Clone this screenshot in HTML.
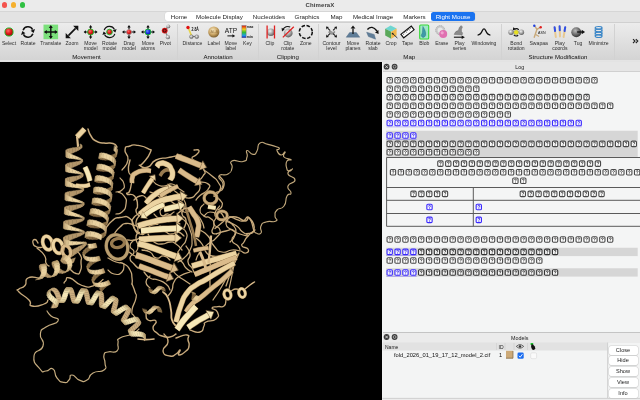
<!DOCTYPE html>
<html><head><meta charset="utf-8"><title>ChimeraX</title>
<style>
*{margin:0;padding:0;box-sizing:border-box}
html,body{width:640px;height:400px;overflow:hidden;background:#ececec;font-family:"Liberation Sans",sans-serif;}
#root{will-change:transform;position:relative;width:640px;height:400px;background:#ececec;overflow:hidden}
.abs{position:absolute}
#titlebar{left:0;top:0;width:640px;height:22.5px;background:linear-gradient(#ebebeb 0,#ebebeb 11.2px,#d6d6d6 11.2px,#d6d6d6 11.8px,#e3e3e3 11.8px,#e3e3e3 22px,#d0d0d0 22px)}
#title{left:0;width:640px;top:2px;text-align:center;font-size:6px;font-weight:bold;color:#3c3c3c;letter-spacing:.1px}
.tl{width:5.4px;height:5.4px;border-radius:50%;top:2.3px}
#tabs{left:164.5px;top:11.6px;width:310px;height:9.2px;background:#fff;border-radius:3px;box-shadow:0 0 0 .5px #d6d6d6}
.tab{position:absolute;top:11.6px;height:9.2px;font-size:6.2px;line-height:9.4px;color:#222;text-align:center;white-space:nowrap}
.tab.sel{background:#1a73f0;color:#fff;border-radius:2.5px}
#toolbar{left:0;top:22.5px;width:640px;height:39.5px;background:linear-gradient(#ececec 0,#d4d4d4 36.5px,#e4e4e4 37.5px,#e2e2e2 39.5px);}
.lbl{position:absolute;font-size:5.1px;line-height:5px;color:#2c2c2c;text-align:center;white-space:nowrap;transform:translateX(-50%)}
.grp{position:absolute;top:52.9px;font-size:6.1px;line-height:7px;color:#111;text-align:center;transform:translateX(-50%);white-space:nowrap}
.vsep{position:absolute;top:24px;width:1px;height:36px;background:#d2d2d2}
#view{left:0;top:62px;width:382.2px;height:338px;background:#000}
#right{left:382.2px;top:62px;width:257.8px;height:338.5px;background:#f3f4f4}
.hdr{position:absolute;left:382.5px;width:257.5px;padding-left:17px;background:#e6e6e6;font-size:5.4px;text-align:center;color:#222}
.btn{position:absolute;left:608.5px;width:29px;height:9px;background:#fff;border-radius:2px;box-shadow:0 0 0 .5px #cfcfcf,0 .5px .5px #bbb;font-size:5.6px;line-height:9px;text-align:center;color:#222}
svg{position:absolute;left:0;top:0}
</style></head><body><div id="root">
<div id="titlebar" class="abs"></div>
<div class="abs tl" style="left:1.8px;background:#f4544d"></div><div class="abs tl" style="left:10.8px;background:#f5b02e"></div><div class="abs tl" style="left:19.9px;background:#2fc042"></div>
<div id="title" class="abs">ChimeraX</div>
<div id="tabs" class="abs"></div>
<div class="tab" style="left:165px;width:28px">Home</div>
<div class="tab" style="left:193px;width:53px">Molecule Display</div>
<div class="tab" style="left:249px;width:40px">Nucleotides</div>
<div class="tab" style="left:291px;width:32px">Graphics</div>
<div class="tab" style="left:326px;width:21px">Map</div>
<div class="tab" style="left:349px;width:48px">Medical Image</div>
<div class="tab" style="left:399px;width:31px">Markers</div>
<div class="tab sel" style="left:431px;width:44px">Right Mouse</div>
<div id="toolbar" class="abs"></div>
<div class="vsep" style="left:176.5px"></div>
<div class="vsep" style="left:258.2px"></div>
<div class="vsep" style="left:317.5px"></div>
<div class="vsep" style="left:501.1px"></div>
<div class="vsep" style="left:614.2px"></div>
<div class="lbl" style="left:9px;top:40.6px">Select</div>
<div class="lbl" style="left:28px;top:40.6px">Rotate</div>
<div class="lbl" style="left:50.8px;top:40.6px">Translate</div>
<div class="lbl" style="left:72px;top:40.6px">Zoom</div>
<div class="lbl" style="left:90.6px;top:40.6px">Move<br>model</div>
<div class="lbl" style="left:109.5px;top:40.6px">Rotate<br>model</div>
<div class="lbl" style="left:129px;top:40.6px">Drag<br>model</div>
<div class="lbl" style="left:148px;top:40.6px">Move<br>atoms</div>
<div class="lbl" style="left:165.3px;top:40.6px">Pivot</div>
<div class="lbl" style="left:192.5px;top:40.6px">Distance</div>
<div class="lbl" style="left:213.8px;top:40.6px">Label</div>
<div class="lbl" style="left:230.8px;top:40.6px">Move<br>label</div>
<div class="lbl" style="left:247.5px;top:40.6px">Key</div>
<div class="lbl" style="left:270px;top:40.6px">Clip</div>
<div class="lbl" style="left:287.8px;top:40.6px">Clip<br>rotate</div>
<div class="lbl" style="left:305.8px;top:40.6px">Zone</div>
<div class="lbl" style="left:331.5px;top:40.6px">Contour<br>level</div>
<div class="lbl" style="left:353px;top:40.6px">Move<br>planes</div>
<div class="lbl" style="left:373px;top:40.6px">Rotate<br>slab</div>
<div class="lbl" style="left:391px;top:40.6px">Crop</div>
<div class="lbl" style="left:407.5px;top:40.6px">Tape</div>
<div class="lbl" style="left:424.3px;top:40.6px">Blob</div>
<div class="lbl" style="left:441.8px;top:40.6px">Erase</div>
<div class="lbl" style="left:459.5px;top:40.6px">Play<br>series</div>
<div class="lbl" style="left:484px;top:40.6px">Windowing</div>
<div class="lbl" style="left:516.2px;top:40.6px">Bond<br>rotation</div>
<div class="lbl" style="left:538.7px;top:40.6px">Swapaa</div>
<div class="lbl" style="left:559.8px;top:40.6px">Play<br>coords</div>
<div class="lbl" style="left:578.1px;top:40.6px">Tug</div>
<div class="lbl" style="left:598.6px;top:40.6px">Minimize</div>
<div class="grp" style="left:86.5px">Movement</div>
<div class="grp" style="left:218px">Annotation</div>
<div class="grp" style="left:287.8px">Clipping</div>
<div class="grp" style="left:409.3px">Map</div>
<div class="grp" style="left:558px">Structure Modification</div>
<svg width="640" height="62" viewBox="0 0 640 62"><path d="M633 39.2l2 1.9-2 1.9M635.8 39.2l2 1.9-2 1.9" fill="none" stroke="#222" stroke-width="1.1"/></svg>
<div id="view" class="abs"></div>
<div id="right" class="abs"></div>
<div class="hdr" style="top:61.5px;height:10px;line-height:10px;border-bottom:.5px solid #d0d0d0">Log</div>
<div class="hdr" style="top:331.5px;height:11px;line-height:11px;border-top:.7px solid #c4c4c4;background:#ebebeb">Models</div>
<svg width="640" height="400" viewBox="0 0 640 400">
<defs>
<g id="pg"><rect x=".55" y=".55" width="5.3" height="5.5" rx="1.1" fill="#ffffff" stroke="#484848" stroke-width="1.1"/><path d="M2.3 2.6q0-.9.95-.9t.95.75q0 .5-.95 1v.4M3.25 4.5v.6" stroke="#222" stroke-width=".75" fill="none"/></g>
<g id="pd"><rect x=".55" y=".55" width="5.3" height="5.5" rx="1.1" fill="#f8f8f8" stroke="#333333" stroke-width="1.1"/><path d="M2.3 2.6q0-.9.95-.9t.95.75q0 .5-.95 1v.4M3.25 4.5v.6" stroke="#111" stroke-width=".75" fill="none"/></g>
<g id="pb"><rect x=".55" y=".55" width="5.3" height="5.5" rx="1.1" fill="#f4f4ff" stroke="#3a28ff" stroke-width="1.1"/><path d="M2.3 2.6q0-.9.95-.9t.95.75q0 .5-.95 1v.4M3.25 4.5v.6" stroke="#1a0ce0" stroke-width=".75" fill="none"/></g>
</defs>
<rect x="382.5" y="72" width="257.5" height="259.5" fill="#f4f5f5"/>
<rect x="386" y="130.75" width="251.7" height="26.15" fill="#d6d6d6"/>
<rect x="386" y="247.75" width="251.7" height="8.35" fill="#d6d6d6"/>
<rect x="386" y="268.25" width="251.7" height="8.35" fill="#d6d6d6"/>
<use href="#pg" x="386.50" y="77.00"/><use href="#pg" x="394.38" y="77.00"/><use href="#pg" x="402.25" y="77.00"/><use href="#pg" x="410.12" y="77.00"/><use href="#pg" x="418.00" y="77.00"/><use href="#pg" x="425.88" y="77.00"/><use href="#pg" x="433.75" y="77.00"/><use href="#pg" x="441.62" y="77.00"/><use href="#pg" x="449.50" y="77.00"/><use href="#pg" x="457.38" y="77.00"/><use href="#pg" x="465.25" y="77.00"/><use href="#pg" x="473.12" y="77.00"/><use href="#pg" x="481.00" y="77.00"/><use href="#pg" x="488.88" y="77.00"/><use href="#pg" x="496.75" y="77.00"/><use href="#pg" x="504.62" y="77.00"/><use href="#pg" x="512.50" y="77.00"/><use href="#pg" x="520.38" y="77.00"/><use href="#pg" x="528.25" y="77.00"/><use href="#pg" x="536.12" y="77.00"/><use href="#pg" x="544.00" y="77.00"/><use href="#pg" x="551.88" y="77.00"/><use href="#pg" x="559.75" y="77.00"/><use href="#pg" x="567.62" y="77.00"/><use href="#pg" x="575.50" y="77.00"/><use href="#pg" x="583.38" y="77.00"/><use href="#pg" x="591.25" y="77.00"/>
<use href="#pg" x="386.50" y="85.50"/><use href="#pg" x="394.38" y="85.50"/><use href="#pg" x="402.25" y="85.50"/><use href="#pg" x="410.12" y="85.50"/><use href="#pg" x="418.00" y="85.50"/><use href="#pg" x="425.88" y="85.50"/><use href="#pg" x="433.75" y="85.50"/><use href="#pg" x="441.62" y="85.50"/><use href="#pg" x="449.50" y="85.50"/><use href="#pg" x="457.38" y="85.50"/><use href="#pg" x="465.25" y="85.50"/><use href="#pg" x="473.12" y="85.50"/>
<use href="#pg" x="386.50" y="93.85"/><use href="#pg" x="394.38" y="93.85"/><use href="#pg" x="402.25" y="93.85"/><use href="#pg" x="410.12" y="93.85"/><use href="#pg" x="418.00" y="93.85"/><use href="#pg" x="425.88" y="93.85"/><use href="#pg" x="433.75" y="93.85"/><use href="#pg" x="441.62" y="93.85"/><use href="#pg" x="449.50" y="93.85"/><use href="#pg" x="457.38" y="93.85"/><use href="#pg" x="465.25" y="93.85"/><use href="#pg" x="473.12" y="93.85"/><use href="#pg" x="481.00" y="93.85"/><use href="#pg" x="488.88" y="93.85"/><use href="#pg" x="496.75" y="93.85"/><use href="#pg" x="504.62" y="93.85"/><use href="#pg" x="512.50" y="93.85"/><use href="#pg" x="520.38" y="93.85"/><use href="#pg" x="528.25" y="93.85"/><use href="#pg" x="536.12" y="93.85"/><use href="#pg" x="544.00" y="93.85"/><use href="#pg" x="551.88" y="93.85"/><use href="#pg" x="559.75" y="93.85"/><use href="#pg" x="567.62" y="93.85"/><use href="#pg" x="575.50" y="93.85"/><use href="#pg" x="583.38" y="93.85"/>
<use href="#pg" x="386.50" y="102.50"/><use href="#pg" x="394.38" y="102.50"/><use href="#pg" x="402.25" y="102.50"/><use href="#pg" x="410.12" y="102.50"/><use href="#pg" x="418.00" y="102.50"/><use href="#pg" x="425.88" y="102.50"/><use href="#pg" x="433.75" y="102.50"/><use href="#pg" x="441.62" y="102.50"/><use href="#pg" x="449.50" y="102.50"/><use href="#pg" x="457.38" y="102.50"/><use href="#pg" x="465.25" y="102.50"/><use href="#pg" x="473.12" y="102.50"/><use href="#pg" x="481.00" y="102.50"/><use href="#pg" x="488.88" y="102.50"/><use href="#pg" x="496.75" y="102.50"/><use href="#pg" x="504.62" y="102.50"/><use href="#pg" x="512.50" y="102.50"/><use href="#pg" x="520.38" y="102.50"/><use href="#pg" x="528.25" y="102.50"/><use href="#pg" x="536.12" y="102.50"/><use href="#pg" x="544.00" y="102.50"/><use href="#pg" x="551.88" y="102.50"/><use href="#pg" x="559.75" y="102.50"/><use href="#pg" x="567.62" y="102.50"/><use href="#pg" x="575.50" y="102.50"/><use href="#pg" x="583.38" y="102.50"/><use href="#pg" x="591.25" y="102.50"/><use href="#pg" x="599.12" y="102.50"/><use href="#pg" x="607.00" y="102.50"/>
<use href="#pg" x="386.50" y="111.15"/><use href="#pg" x="394.38" y="111.15"/><use href="#pg" x="402.25" y="111.15"/><use href="#pg" x="410.12" y="111.15"/><use href="#pg" x="418.00" y="111.15"/><use href="#pg" x="425.88" y="111.15"/><use href="#pg" x="433.75" y="111.15"/><use href="#pg" x="441.62" y="111.15"/><use href="#pg" x="449.50" y="111.15"/><use href="#pg" x="457.38" y="111.15"/><use href="#pg" x="465.25" y="111.15"/><use href="#pg" x="473.12" y="111.15"/><use href="#pg" x="481.00" y="111.15"/><use href="#pg" x="488.88" y="111.15"/><use href="#pg" x="496.75" y="111.15"/><use href="#pg" x="504.62" y="111.15"/>
<use href="#pb" x="386.50" y="119.75"/><use href="#pb" x="394.38" y="119.75"/><use href="#pb" x="402.25" y="119.75"/><use href="#pb" x="410.12" y="119.75"/><use href="#pb" x="418.00" y="119.75"/><use href="#pb" x="425.88" y="119.75"/><use href="#pb" x="433.75" y="119.75"/><use href="#pb" x="441.62" y="119.75"/><use href="#pb" x="449.50" y="119.75"/><use href="#pb" x="457.38" y="119.75"/><use href="#pb" x="465.25" y="119.75"/><use href="#pb" x="473.12" y="119.75"/><use href="#pb" x="481.00" y="119.75"/><use href="#pb" x="488.88" y="119.75"/><use href="#pb" x="496.75" y="119.75"/><use href="#pb" x="504.62" y="119.75"/><use href="#pb" x="512.50" y="119.75"/><use href="#pb" x="520.38" y="119.75"/><use href="#pb" x="528.25" y="119.75"/><use href="#pb" x="536.12" y="119.75"/><use href="#pb" x="544.00" y="119.75"/><use href="#pb" x="551.88" y="119.75"/><use href="#pb" x="559.75" y="119.75"/><use href="#pb" x="567.62" y="119.75"/><use href="#pb" x="575.50" y="119.75"/><rect x="386.5" y="126.6" width="195.475" height=".6" fill="#6a5cf5" opacity=".7"/>
<use href="#pb" x="386.50" y="132.25"/><use href="#pb" x="394.38" y="132.25"/><use href="#pb" x="402.25" y="132.25"/><use href="#pb" x="410.12" y="132.25"/><rect x="386.5" y="139.1" width="30.1" height=".6" fill="#6a5cf5" opacity=".7"/>
<use href="#pg" x="386.50" y="140.55"/><use href="#pg" x="394.38" y="140.55"/><use href="#pg" x="402.25" y="140.55"/><use href="#pg" x="410.12" y="140.55"/><use href="#pg" x="418.00" y="140.55"/><use href="#pg" x="425.88" y="140.55"/><use href="#pg" x="433.75" y="140.55"/><use href="#pg" x="441.62" y="140.55"/><use href="#pg" x="449.50" y="140.55"/><use href="#pg" x="457.38" y="140.55"/><use href="#pg" x="465.25" y="140.55"/><use href="#pg" x="473.12" y="140.55"/><use href="#pg" x="481.00" y="140.55"/><use href="#pg" x="488.88" y="140.55"/><use href="#pg" x="496.75" y="140.55"/><use href="#pg" x="504.62" y="140.55"/><use href="#pg" x="512.50" y="140.55"/><use href="#pg" x="520.38" y="140.55"/><use href="#pg" x="528.25" y="140.55"/><use href="#pg" x="536.12" y="140.55"/><use href="#pg" x="544.00" y="140.55"/><use href="#pg" x="551.88" y="140.55"/><use href="#pg" x="559.75" y="140.55"/><use href="#pg" x="567.62" y="140.55"/><use href="#pg" x="575.50" y="140.55"/><use href="#pg" x="583.38" y="140.55"/><use href="#pg" x="591.25" y="140.55"/><use href="#pg" x="599.12" y="140.55"/><use href="#pg" x="607.00" y="140.55"/><use href="#pg" x="614.88" y="140.55"/><use href="#pg" x="622.75" y="140.55"/><use href="#pg" x="630.62" y="140.55"/>
<use href="#pg" x="386.50" y="149.00"/><use href="#pg" x="394.38" y="149.00"/><use href="#pg" x="402.25" y="149.00"/><use href="#pg" x="410.12" y="149.00"/><use href="#pg" x="418.00" y="149.00"/><use href="#pg" x="425.88" y="149.00"/><use href="#pg" x="433.75" y="149.00"/><use href="#pg" x="441.62" y="149.00"/><use href="#pg" x="449.50" y="149.00"/><use href="#pg" x="457.38" y="149.00"/><use href="#pg" x="465.25" y="149.00"/><use href="#pg" x="473.12" y="149.00"/>
<g stroke="#5a5a5a" stroke-width="1" fill="none"><path d="M386.6 226.3V157.5H640M386.6 187.5H640M386.6 200.3H640M386.6 213.5H640M386.6 226.3H640M473.3 187.5V226.3"/></g>
<use href="#pg" x="437.20" y="160.35"/><use href="#pg" x="445.07" y="160.35"/><use href="#pg" x="452.95" y="160.35"/><use href="#pg" x="460.82" y="160.35"/><use href="#pg" x="468.70" y="160.35"/><use href="#pg" x="476.57" y="160.35"/><use href="#pg" x="484.45" y="160.35"/><use href="#pg" x="492.32" y="160.35"/><use href="#pg" x="500.20" y="160.35"/><use href="#pg" x="508.07" y="160.35"/><use href="#pg" x="515.95" y="160.35"/><use href="#pg" x="523.83" y="160.35"/><use href="#pg" x="531.70" y="160.35"/><use href="#pg" x="539.58" y="160.35"/><use href="#pg" x="547.45" y="160.35"/><use href="#pg" x="555.33" y="160.35"/><use href="#pg" x="563.20" y="160.35"/><use href="#pg" x="571.08" y="160.35"/><use href="#pg" x="578.95" y="160.35"/><use href="#pg" x="586.83" y="160.35"/><use href="#pg" x="594.70" y="160.35"/>
<use href="#pg" x="389.80" y="168.95"/><use href="#pg" x="397.68" y="168.95"/><use href="#pg" x="405.55" y="168.95"/><use href="#pg" x="413.43" y="168.95"/><use href="#pg" x="421.30" y="168.95"/><use href="#pg" x="429.18" y="168.95"/><use href="#pg" x="437.05" y="168.95"/><use href="#pg" x="444.93" y="168.95"/><use href="#pg" x="452.80" y="168.95"/><use href="#pg" x="460.68" y="168.95"/><use href="#pg" x="468.55" y="168.95"/><use href="#pg" x="476.43" y="168.95"/><use href="#pg" x="484.30" y="168.95"/><use href="#pg" x="492.18" y="168.95"/><use href="#pg" x="500.05" y="168.95"/><use href="#pg" x="507.93" y="168.95"/><use href="#pg" x="515.80" y="168.95"/><use href="#pg" x="523.67" y="168.95"/><use href="#pg" x="531.55" y="168.95"/><use href="#pg" x="539.42" y="168.95"/><use href="#pg" x="547.30" y="168.95"/><use href="#pg" x="555.17" y="168.95"/><use href="#pg" x="563.05" y="168.95"/><use href="#pg" x="570.92" y="168.95"/><use href="#pg" x="578.80" y="168.95"/><use href="#pg" x="586.67" y="168.95"/><use href="#pg" x="594.55" y="168.95"/><use href="#pg" x="602.42" y="168.95"/><use href="#pg" x="610.30" y="168.95"/><use href="#pg" x="618.17" y="168.95"/><use href="#pg" x="626.05" y="168.95"/><use href="#pg" x="633.92" y="168.95"/>
<use href="#pg" x="512.20" y="177.45"/><use href="#pg" x="520.08" y="177.45"/>
<use href="#pg" x="410.30" y="190.55"/><use href="#pg" x="418.18" y="190.55"/><use href="#pg" x="426.05" y="190.55"/><use href="#pg" x="433.93" y="190.55"/><use href="#pg" x="441.80" y="190.55"/>
<use href="#pg" x="519.60" y="190.55"/><use href="#pg" x="527.48" y="190.55"/><use href="#pg" x="535.35" y="190.55"/><use href="#pg" x="543.23" y="190.55"/><use href="#pg" x="551.10" y="190.55"/><use href="#pg" x="558.98" y="190.55"/><use href="#pg" x="566.85" y="190.55"/><use href="#pg" x="574.73" y="190.55"/><use href="#pg" x="582.60" y="190.55"/><use href="#pg" x="590.48" y="190.55"/><use href="#pg" x="598.35" y="190.55"/>
<use href="#pb" x="426.30" y="203.75"/>
<use href="#pb" x="475.60" y="203.75"/>
<use href="#pb" x="426.30" y="216.55"/>
<use href="#pb" x="475.60" y="216.55"/>
<use href="#pg" x="386.50" y="236.15"/><use href="#pg" x="394.38" y="236.15"/><use href="#pg" x="402.25" y="236.15"/><use href="#pg" x="410.12" y="236.15"/><use href="#pg" x="418.00" y="236.15"/><use href="#pg" x="425.88" y="236.15"/><use href="#pg" x="433.75" y="236.15"/><use href="#pg" x="441.62" y="236.15"/><use href="#pg" x="449.50" y="236.15"/><use href="#pg" x="457.38" y="236.15"/><use href="#pg" x="465.25" y="236.15"/><use href="#pg" x="473.12" y="236.15"/><use href="#pg" x="481.00" y="236.15"/><use href="#pg" x="488.88" y="236.15"/><use href="#pg" x="496.75" y="236.15"/><use href="#pg" x="504.62" y="236.15"/><use href="#pg" x="512.50" y="236.15"/><use href="#pg" x="520.38" y="236.15"/><use href="#pg" x="528.25" y="236.15"/><use href="#pg" x="536.12" y="236.15"/><use href="#pg" x="544.00" y="236.15"/><use href="#pg" x="551.88" y="236.15"/><use href="#pg" x="559.75" y="236.15"/><use href="#pg" x="567.62" y="236.15"/><use href="#pg" x="575.50" y="236.15"/><use href="#pg" x="583.38" y="236.15"/><use href="#pg" x="591.25" y="236.15"/><use href="#pg" x="599.12" y="236.15"/><use href="#pg" x="607.00" y="236.15"/>
<use href="#pb" x="386.50" y="248.55"/><use href="#pb" x="394.38" y="248.55"/><use href="#pb" x="402.25" y="248.55"/><use href="#pb" x="410.12" y="248.55"/><rect x="386.5" y="255.4" width="30.1" height=".6" fill="#6a5cf5" opacity=".7"/>
<use href="#pd" x="418.00" y="248.55"/><use href="#pd" x="425.88" y="248.55"/><use href="#pd" x="433.75" y="248.55"/><use href="#pd" x="441.62" y="248.55"/><use href="#pd" x="449.50" y="248.55"/><use href="#pd" x="457.38" y="248.55"/><use href="#pd" x="465.25" y="248.55"/><use href="#pd" x="473.12" y="248.55"/><use href="#pd" x="481.00" y="248.55"/><use href="#pd" x="488.88" y="248.55"/><use href="#pd" x="496.75" y="248.55"/><use href="#pd" x="504.62" y="248.55"/><use href="#pd" x="512.50" y="248.55"/><use href="#pd" x="520.38" y="248.55"/><use href="#pd" x="528.25" y="248.55"/><use href="#pd" x="536.12" y="248.55"/><use href="#pd" x="544.00" y="248.55"/><use href="#pd" x="551.88" y="248.55"/>
<use href="#pg" x="386.50" y="257.25"/><use href="#pg" x="394.38" y="257.25"/><use href="#pg" x="402.25" y="257.25"/><use href="#pg" x="410.12" y="257.25"/><use href="#pg" x="418.00" y="257.25"/><use href="#pg" x="425.88" y="257.25"/><use href="#pg" x="433.75" y="257.25"/><use href="#pg" x="441.62" y="257.25"/><use href="#pg" x="449.50" y="257.25"/><use href="#pg" x="457.38" y="257.25"/><use href="#pg" x="465.25" y="257.25"/><use href="#pg" x="473.12" y="257.25"/><use href="#pg" x="481.00" y="257.25"/><use href="#pg" x="488.88" y="257.25"/><use href="#pg" x="496.75" y="257.25"/><use href="#pg" x="504.62" y="257.25"/><use href="#pg" x="512.50" y="257.25"/><use href="#pg" x="520.38" y="257.25"/><use href="#pg" x="528.25" y="257.25"/><use href="#pg" x="536.12" y="257.25"/>
<use href="#pb" x="386.50" y="269.25"/><use href="#pb" x="394.38" y="269.25"/><use href="#pb" x="402.25" y="269.25"/><use href="#pb" x="410.12" y="269.25"/><rect x="386.5" y="276.1" width="30.1" height=".6" fill="#6a5cf5" opacity=".7"/>
<use href="#pd" x="418.00" y="269.25"/><use href="#pd" x="425.88" y="269.25"/><use href="#pd" x="433.75" y="269.25"/><use href="#pd" x="441.62" y="269.25"/><use href="#pd" x="449.50" y="269.25"/><use href="#pd" x="457.38" y="269.25"/><use href="#pd" x="465.25" y="269.25"/><use href="#pd" x="473.12" y="269.25"/><use href="#pd" x="481.00" y="269.25"/><use href="#pd" x="488.88" y="269.25"/><use href="#pd" x="496.75" y="269.25"/><use href="#pd" x="504.62" y="269.25"/><use href="#pd" x="512.50" y="269.25"/><use href="#pd" x="520.38" y="269.25"/><use href="#pd" x="528.25" y="269.25"/><use href="#pd" x="536.12" y="269.25"/><use href="#pd" x="544.00" y="269.25"/><use href="#pd" x="551.88" y="269.25"/>
<circle cx="386.6" cy="66.7" r="2.9" fill="#3b3b3b"/><path d="M385.3 65.4l2.6 2.6m0-2.6l-2.6 2.6" stroke="#e8e8e8" stroke-width=".8"/>
<circle cx="394.6" cy="66.7" r="2.9" fill="#3b3b3b"/><circle cx="394.6" cy="66.7" r="1.4" fill="none" stroke="#ddd" stroke-width=".6"/>
<circle cx="386.6" cy="337" r="2.9" fill="#3b3b3b"/><path d="M385.3 335.7l2.6 2.6m0-2.6l-2.6 2.6" stroke="#e8e8e8" stroke-width=".8"/>
<circle cx="394.6" cy="337" r="2.9" fill="#3b3b3b"/><circle cx="394.6" cy="337" r="1.4" fill="none" stroke="#ddd" stroke-width=".6"/>
<rect x="382.5" y="342.5" width="225" height="8" fill="#e2e2e2"/>
<path d="M496.5 343v7M505 343v7M514 343v7M527.5 343v7" stroke="#cfcfcf" stroke-width=".6"/>
<path d="M607.6 342.5V398" stroke="#c8c8c8" stroke-width=".8"/>
<path d="M382.5 398.4H640" stroke="#bdbdbd" stroke-width=".8"/>
<rect x="382.5" y="398.8" width="257.5" height="1.2" fill="#ececec"/>
<rect x="506" y="350.8" width="7" height="7.6" fill="#cdaa78"/><path d="M506 358.2h7V351" stroke="#7a6240" stroke-width=".7" fill="none"/>
<rect x="517.5" y="352.6" width="6.2" height="6.2" rx="1.3" fill="#1a6cf0"/><path d="M518.9 355.8l1.3 1.4 2.2-3" stroke="#fff" stroke-width=".9" fill="none"/>
<rect x="530.7" y="352.8" width="5.9" height="5.9" rx="1.3" fill="#fafafa" stroke="#d2d2d2" stroke-width=".5"/>
<path d="M516.3 346.4q3.7-3.6 7.4 0q-3.7 3.6-7.4 0z" fill="none" stroke="#333" stroke-width=".7"/><circle cx="520" cy="346.4" r="1.2" fill="#333"/>
<rect x="530.6" y="343" width="2.6" height="2" fill="#19c22a"/><path d="M531.3 344.5l1.5-.3 2 2.2.6 2.3-1.6 1.3-1.7-.6-1-2.3z" fill="#111"/>
</svg>
<div class="abs" style="left:385px;top:343.5px;font-size:5px;line-height:6px;color:#222">Name</div>
<div class="abs" style="left:498.5px;top:343.5px;font-size:5px;line-height:6px;color:#222">ID</div>
<div class="abs" style="left:394px;top:352px;font-size:5.75px;line-height:7px;color:#111;white-space:nowrap">fold_2026_01_19_17_12_model_2.cif</div>
<div class="abs" style="left:499px;top:352px;font-size:5.75px;line-height:7px;color:#111">1</div>
<div class="btn" style="top:345.5px">Close</div>
<div class="btn" style="top:356.25px">Hide</div>
<div class="btn" style="top:367px">Show</div>
<div class="btn" style="top:377.75px">View</div>
<div class="btn" style="top:388.5px">Info</div>
<svg width="640" height="62" viewBox="0 0 640 62">
<g transform="translate(9 32)"><defs><radialGradient id="rg1" cx=".4" cy=".35" r=".7"><stop offset="0" stop-color="#ff6a6a"/><stop offset=".5" stop-color="#e01818"/><stop offset="1" stop-color="#8a0a0a"/></radialGradient><radialGradient id="bg1" cx=".4" cy=".35" r=".7"><stop offset="0" stop-color="#6a8aff"/><stop offset=".5" stop-color="#1830e0"/><stop offset="1" stop-color="#0a0a8a"/></radialGradient><radialGradient id="gg1" cx=".4" cy=".35" r=".7"><stop offset="0" stop-color="#f4f4f4"/><stop offset=".6" stop-color="#9a9a9a"/><stop offset="1" stop-color="#555"/></radialGradient></defs><circle r="4.1" fill="url(#rg1)" stroke="#18c028" stroke-width=".9"/></g>
<g transform="translate(28 32)"><g fill="none" stroke="#111" stroke-width="1.5"><path d="M-4.9 -1.8A5.2 5.2 0 0 1 4.6 -2.4"/><path d="M4.9 1.8A5.2 5.2 0 0 1 -4.6 2.4"/></g><path d="M5.6 .9L7 -2.9L2.6 -1.3z" fill="#111"/><path d="M-5.6 -.9L-7 2.9L-2.6 1.3z" fill="#111"/></g>
<g transform="translate(50.8 32)"><rect x="-7.3" y="-7.4" width="14.6" height="14.6" fill="#7be07b"/><path d="M0 -5.9 V5.9 M-5.9 0 H5.9" stroke="#111" stroke-width="1.4"/><path transform="rotate(0)" d="M0 -6.9 l2 2.9 h-4z" fill="#111"/><path transform="rotate(90)" d="M0 -6.9 l2 2.9 h-4z" fill="#111"/><path transform="rotate(180)" d="M0 -6.9 l2 2.9 h-4z" fill="#111"/><path transform="rotate(270)" d="M0 -6.9 l2 2.9 h-4z" fill="#111"/></g>
<g transform="translate(72 32)"><path d="M-3.6 3.6L3.6 -3.6" stroke="#111" stroke-width="1.7"/><path d="M6.3 -6.3h-5.2l5.2 5.2z" fill="#111"/><path d="M-6.3 6.3h5.2l-5.2-5.2z" fill="#111"/></g>
<g transform="translate(90.6 32)"><path d="M0 -6 V6 M-6 0 H6" stroke="#111" stroke-width="1.1"/><path transform="rotate(0)" d="M0 -7 l1.7 2.4 h-3.4z" fill="#111"/><path transform="rotate(90)" d="M0 -7 l1.7 2.4 h-3.4z" fill="#111"/><path transform="rotate(180)" d="M0 -7 l1.7 2.4 h-3.4z" fill="#111"/><path transform="rotate(270)" d="M0 -7 l1.7 2.4 h-3.4z" fill="#111"/><circle r="3" fill="url(#rg1)" stroke="#18c028" stroke-width=".9"/></g>
<g transform="translate(109.5 32)"><g fill="none" stroke="#111" stroke-width="1.2"><path d="M-5.3 -1.9A5.6 5.6 0 0 1 5 -2.6"/><path d="M5.3 1.9A5.6 5.6 0 0 1 -5 2.6"/></g><path d="M5.9 .6L7.1 -2.9L3.2 -1.5z" fill="#111"/><path d="M-5.9 -.6L-7.1 2.9L-3.2 1.5z" fill="#111"/><circle r="2.8" fill="url(#rg1)" stroke="#18c028" stroke-width=".9"/></g>
<g transform="translate(129 32)"><path d="M0 -6 V6 M-6 0 H6" stroke="#111" stroke-width="1.1"/><path transform="rotate(0)" d="M0 -7 l1.7 2.4 h-3.4z" fill="#111"/><path transform="rotate(90)" d="M0 -7 l1.7 2.4 h-3.4z" fill="#111"/><path transform="rotate(180)" d="M0 -7 l1.7 2.4 h-3.4z" fill="#111"/><path transform="rotate(270)" d="M0 -7 l1.7 2.4 h-3.4z" fill="#111"/><circle r="2.6" fill="url(#rg1)" stroke="#aaa" stroke-width=".6"/></g>
<g transform="translate(148 32)"><path d="M0 -6 V6 M-6 0 H6" stroke="#111" stroke-width="1.1"/><path transform="rotate(0)" d="M0 -7 l1.7 2.4 h-3.4z" fill="#111"/><path transform="rotate(90)" d="M0 -7 l1.7 2.4 h-3.4z" fill="#111"/><path transform="rotate(180)" d="M0 -7 l1.7 2.4 h-3.4z" fill="#111"/><path transform="rotate(270)" d="M0 -7 l1.7 2.4 h-3.4z" fill="#111"/><circle r="3" fill="url(#bg1)" stroke="#18c028" stroke-width=".9"/></g>
<g transform="translate(165.3 32)"><path d="M-0.5 -1.5L3 -5.5M-0.5 -1.5L2.6 5" stroke="#888" stroke-width="1.3"/><circle cx="3" cy="-5.6" r="1.9" fill="url(#gg1)"/><circle cx="2.6" cy="5.2" r="2.1" fill="url(#gg1)"/><circle cx="-0.6" cy="-1.4" r="2.9" fill="#d81414"/><circle cx="-0.6" cy="-1.4" r="1.5" fill="none" stroke="#111" stroke-width=".8"/></g>
<g transform="translate(192.5 32)"><g transform="translate(.5 1.3)"><path d="M-4.8 -5.6L-1.4 2.6" stroke="#e6d44a" stroke-width="1.6"/><path d="M-1.4 3.2H3.6" stroke="#777" stroke-width="1.2"/><circle cx="-5" cy="-5.8" r="1.7" fill="#e01010"/><circle cx="-1.6" cy="3.4" r="1.9" fill="url(#gg1)" stroke="#666" stroke-width=".4"/><circle cx="3.8" cy="3.4" r="1.9" fill="url(#gg1)" stroke="#666" stroke-width=".4"/><text x="-1.5" y="-2.2" font-size="5" font-weight="bold" fill="#111" font-family="Liberation Sans" textLength="7.4" lengthAdjust="spacingAndGlyphs">2.8Å</text></g></g>
<g transform="translate(213.8 32)"><defs><radialGradient id="tg1" cx=".42" cy=".35" r=".7"><stop offset="0" stop-color="#f8e8c0"/><stop offset=".55" stop-color="#c9a464"/><stop offset="1" stop-color="#6a4e22"/></radialGradient></defs><circle r="5.6" fill="url(#tg1)"/><text x="-3.2" y="1" font-size="4" fill="#8a6a3a" font-family="Liberation Sans" opacity=".8">ALA</text></g>
<g transform="translate(230.8 32)"><text x="-6" y="1" font-size="6.6" fill="#111" font-family="Liberation Sans">ATP</text><path d="M-3.4 3.9H2" stroke="#111" stroke-width="1"/><path d="M4.4 3.9l-2.8-1.7v3.4z" fill="#111"/></g>
<g transform="translate(247.5 32)"><defs><linearGradient id="kg" x1="0" y1="0" x2="0" y2="1"><stop offset="0" stop-color="#e01010"/><stop offset=".3" stop-color="#f0d020"/><stop offset=".55" stop-color="#30c030"/><stop offset=".8" stop-color="#20a0e0"/><stop offset="1" stop-color="#1818d0"/></linearGradient></defs><rect x="-5.6" y="-6.4" width="4.2" height="12.2" fill="url(#kg)" stroke="#666" stroke-width=".4"/><text x="-0.8" y="-3.6" font-size="3.4" font-weight="bold" fill="#111" font-family="Liberation Sans">max</text><text x="-0.8" y="6" font-size="3.4" font-weight="bold" fill="#111" font-family="Liberation Sans">min</text></g>
<g transform="translate(270 32)"><circle r="3.8" cx=".8" cy=".2" fill="url(#gg1)"/><path d="M-2.9 -6.6V6.6M4.5 -6.6V6.6" stroke="#e02020" stroke-width="1.3"/></g>
<g transform="translate(287.8 32)"><circle cx=".4" cy="1" r="4.4" fill="url(#gg1)"/><path d="M-4.8 -2.4A5.4 5.4 0 0 1 2.4 -5" stroke="#111" stroke-width="1.1" fill="none"/><path d="M-5.8 -0.6l-.4-3.6 3 1.6z" fill="#111"/><path d="M-5 5.4L6 -5.2" stroke="#e02020" stroke-width="1.3"/></g>
<g transform="translate(305.8 32)"><circle r="6.5" fill="none" stroke="#111" stroke-width="1.5" stroke-dasharray="3.5 1.6"/></g>
<g transform="translate(331.5 32)"><path d="M-3 0q1.5-2.5 3-.5t3.2-.6q.6 2.6-1.4 3.2t-3.2-.2z" fill="#999" stroke="#666" stroke-width=".4"/><g transform="rotate(45)"><path d="M0 -2.2V-5.1" stroke="#111" stroke-width="1"/><path d="M0 -7.8 l1.7 2.4h-3.4z" fill="#111"/></g><g transform="rotate(135)"><path d="M0 -2.2V-5.1" stroke="#111" stroke-width="1"/><path d="M0 -7.8 l1.7 2.4h-3.4z" fill="#111"/></g><g transform="rotate(225)"><path d="M0 -2.2V-5.1" stroke="#111" stroke-width="1"/><path d="M0 -7.8 l1.7 2.4h-3.4z" fill="#111"/></g><g transform="rotate(315)"><path d="M0 -2.2V-5.1" stroke="#111" stroke-width="1"/><path d="M0 -7.8 l1.7 2.4h-3.4z" fill="#111"/></g></g>
<g transform="translate(353 32)"><path d="M-6.8 5.2L-3.4 0.6H3.4L6.8 5.2z" fill="#5f7d98" stroke="#4a6680" stroke-width=".4"/><path d="M0 2V-3.6" stroke="#111" stroke-width="1.3"/><path d="M0 -6.6l2.4 3.2h-4.8z" fill="#111"/></g>
<g transform="translate(373 32)"><path d="M-6.4 0.2L1.2 2.4L2.6 7.2L-4.6 4.6z" fill="#5f7d98" stroke="#4a6680" stroke-width=".4"/><path d="M-5.6 -2.6Q-1 -7.4 4 -1" stroke="#111" stroke-width="1.4" fill="none"/><path d="M5.6 2l-3.6-1.6 3.4-2.4z" fill="#111"/></g>
<g transform="translate(391 32)"><path d="M-5.8 -3.2L-.4 -6.6L5.6 -3.4L.2 -.2z" fill="#6fd6d0"/><path d="M-5.8 -3.2L.2 -.2V6.8L-5.8 3.6z" fill="#5aa85a"/><path d="M.2 -.2L5.6 -3.4V3.6L.2 6.8z" fill="#f2b84a"/><path d="M1.6 1.6L6.4 6" stroke="#222" stroke-width=".9"/><circle cx="1.6" cy="1.6" r=".9" fill="#222"/></g>
<g transform="translate(407.5 32)"><g transform="rotate(-38)"><rect x="-6.6" y="-2.3" width="13.2" height="4.6" fill="#fff" stroke="#111" stroke-width="1.1"/><path d="M-4.6 -2v2M-2.8 -2v1.4M-1 -2v2M.8 -2v1.4M2.6 -2v2M4.4 -2v1.4" stroke="#111" stroke-width=".6"/></g></g>
<g transform="translate(424.3 32)"><rect x="-4.6" y="-7" width="9" height="14" rx="1" fill="#9fe8c8" stroke="#38d838" stroke-width="1.1"/><path d="M-1.4 -5.6q2.2 3 2.8 6.4t-1.6 4.4t-3-1.8q1.6-2.4 1.4-4.8z" fill="#3d9aa8" stroke="#2a7080" stroke-width=".4"/></g>
<g transform="translate(441.8 32)"><circle cx="-1.6" cy="-1.8" r="4.6" fill="#c8c8c8" stroke="#888" stroke-width=".5" stroke-dasharray="1.2 .8"/><circle cx="-1.6" cy="-1.8" r="2.6" fill="#e8e8e8"/><circle cx="1.4" cy="2" r="4" fill="#e070b0"/><circle cx=".4" cy=".8" r="1.6" fill="#f4b0d8" opacity=".8"/></g>
<g transform="translate(459.5 32)"><path d="M-5.4 2.4q1.4-3.6 4.2-3.8q.6-3.6 2.8-5l1.4 1.4q-1.6 2-1 4.600q2 1.400 .6 3.400z" fill="#8a8a8a" stroke="#666" stroke-width=".4"/><path d="M-5.600 5.200H2.600" stroke="#111" stroke-width="1.1"/><path d="M5.400 5.200l-3.200-1.800v3.600z" fill="#111"/></g>
<g transform="translate(484 32)"><path d="M-6.400 3.200Q-3.400 3 -1.600 -1.400Q0 -5 1.600 -1.400Q3.400 3 6.400 3.200" stroke="#111" stroke-width="1.3" fill="none"/></g>
<g transform="translate(516.2 32)"><path d="M-5 0H5" stroke="#999" stroke-width="1.4"/><circle cx="-5.200" cy=".2" r="2.700" fill="url(#gg1)"/><circle cx="5.200" cy=".2" r="2.700" fill="url(#gg1)"/><circle cx="0" cy=".4" r="2.400" fill="#e8e020" stroke="#888" stroke-width=".3"/><path d="M-1.800 -2.600A3.400 3.400 0 0 1 2.600 -2.200" stroke="#111" stroke-width="1.2" fill="none"/><path d="M-3.400 -1.600l.4-3.200 2.600 1.800z" fill="#111"/><path d="M2 3.200A3.400 3.400 0 0 1 -2.400 2.800" stroke="#111" stroke-width="1.100" fill="none"/></g>
<g transform="translate(538.7 32)"><path d="M-4.200 -6.400L-1.800 -2.600L-4.600 5.800" stroke="#c8a878" stroke-width="1.400" fill="none"/><path d="M-1.800 -2.600L1.600 -4.600" stroke="#c8a878" stroke-width="1.300"/><path d="M-3 2.600L.4 4.600" stroke="#c8a878" stroke-width="1.200"/><circle cx="-4.400" cy="-6.200" r="1.200" fill="#2040e0"/><circle cx="2" cy="-4.800" r="1.200" fill="#e02020"/><text x="-.6" y="2.200" font-size="3.600" fill="#111" font-family="Liberation Sans">ASN</text></g>
<g transform="translate(559.8 32)"><g stroke-linecap="round"><path d="M-5.200 -4.600L-4 5" stroke="#e8c890" stroke-width="2"/><path d="M-5.200 -4.800L-4.700 -1" stroke="#3050e8" stroke-width="2"/><path d="M-.2 -5.600L.2 4.400" stroke="#e8c890" stroke-width="2"/><path d="M-.2 -5.800L0 -1.800" stroke="#3050e8" stroke-width="2"/><path d="M5.400 -4.600L3.800 5" stroke="#e8c890" stroke-width="2"/><path d="M5.400 -4.800L4.800 -1" stroke="#3050e8" stroke-width="2"/></g></g>
<g transform="translate(578.1 32)"><defs><radialGradient id="dg1" cx=".4" cy=".35" r=".7"><stop offset="0" stop-color="#bbb"/><stop offset=".6" stop-color="#666"/><stop offset="1" stop-color="#2a2a2a"/></radialGradient></defs><circle cx="-1.800" cy=".2" r="5" fill="url(#dg1)"/><path d="M-1 0H4" stroke="#111" stroke-width="1.300"/><path d="M7 0l-3.400-2.200v4.400z" fill="#111"/></g>
<g transform="translate(598.6 32)"><g fill="none" stroke="#3a86c8" stroke-width="1.100"><ellipse cx="0" cy="-4.200" rx="3.400" ry="1.300"/><ellipse cx="0" cy="-1.400" rx="3.400" ry="1.300"/><ellipse cx="0" cy="1.400" rx="3.400" ry="1.300"/><ellipse cx="0" cy="4.200" rx="3.400" ry="1.300"/></g><path d="M-3.400 -4.200V4.200M3.400 -4.200V4.200" stroke="#3a86c8" stroke-width=".8"/></g>
</svg>
<svg width="383" height="400" viewBox="0 0 383 400" style="position:absolute;left:0;top:0"><g fill="none" stroke-linejoin="round" stroke-linecap="round"><path d="M220.0 190.0C221.0 188.0 223.3 188.7 223.0 184.0C222.7 179.3 217.3 179.3 219.0 176.0C220.7 172.7 223.7 176.7 228.0 174.0C232.3 171.3 230.7 172.3 232.0 168.0C233.3 163.7 228.3 163.2 232.0 161.0C235.7 158.8 238.0 162.8 243.0 161.5C248.0 160.2 245.7 160.6 247.0 157.0C248.3 153.4 245.0 151.5 247.0 150.6C249.0 149.7 249.7 154.3 253.0 154.4C256.3 154.5 254.7 154.8 257.0 151.0C259.3 147.2 256.3 145.2 260.0 143.0C263.7 140.8 262.3 143.1 268.0 144.4C273.7 145.7 273.3 145.5 277.0 147.0C280.7 148.5 279.0 147.8 279.0 149.0C279.0 150.2 276.3 148.5 277.0 150.5C277.7 152.5 278.3 154.5 281.0 155.0C283.7 155.5 284.0 151.3 285.0 152.0C286.0 152.7 282.0 154.5 284.0 157.0C286.0 159.5 290.0 158.3 291.0 159.6C292.0 160.9 288.5 158.5 287.0 161.0C285.5 163.5 285.7 163.7 286.4 167.0C287.1 170.3 287.0 170.3 289.0 171.0C291.0 171.7 292.7 168.0 292.4 169.0C292.1 170.0 287.1 170.3 288.0 174.0C288.9 177.7 295.0 176.0 295.0 180.0C295.0 184.0 289.3 181.7 288.0 186.0C286.7 190.3 291.3 189.7 291.0 193.0C290.7 196.3 289.3 191.7 287.0 196.0C284.7 200.3 287.3 201.3 284.0 206.0C280.7 210.7 280.0 206.7 277.0 210.0C274.0 213.3 275.3 212.3 275.0 216.0C274.7 219.7 279.0 219.0 276.0 221.0C273.0 223.0 271.0 220.3 266.0 222.0C261.0 223.7 262.7 222.3 261.0 226.0C259.3 229.7 262.7 230.7 261.0 233.0C259.3 235.3 258.3 233.7 256.0 233.0C253.7 232.3 254.7 231.7 254.0 231.0" stroke="#bfa67a" stroke-width="1.15"/>
<path d="M47.0 311.0C48.3 312.7 47.3 312.7 51.0 316.0C54.7 319.3 59.7 317.3 58.0 321.0C56.3 324.7 51.9 322.7 46.0 327.0C40.1 331.3 41.4 327.7 40.4 334.0C39.4 340.3 45.1 338.7 43.0 346.0C40.9 353.3 35.0 348.3 34.0 356.0C33.0 363.7 36.0 364.0 40.0 369.0C44.0 374.0 41.7 371.0 46.0 371.0C50.3 371.0 49.3 366.7 53.0 369.0C56.7 371.3 53.3 373.5 57.0 378.0C60.7 382.5 60.0 381.7 64.0 382.4C68.0 383.1 66.3 382.5 69.0 380.0C71.7 377.5 68.3 374.9 72.0 375.0C75.7 375.1 75.0 378.7 80.0 380.4C85.0 382.1 82.7 382.5 87.0 380.0C91.3 377.5 87.3 376.3 93.0 373.0C98.7 369.7 100.0 373.3 104.0 370.0C108.0 366.7 105.0 368.0 105.0 363.0C105.0 358.0 103.0 358.7 104.0 355.0C105.0 351.3 103.7 353.3 108.0 352.0C112.3 350.7 113.7 354.0 117.0 351.0C120.3 348.0 117.0 347.3 118.0 343.0C119.0 338.7 115.3 341.0 120.0 338.0C124.7 335.0 125.7 337.0 132.0 334.0C138.3 331.0 136.7 330.7 139.0 329.0" stroke="#c4ab7e" stroke-width="1.2"/>
<path d="M48.0 300.0C46.7 301.3 49.3 302.0 44.0 304.0C38.7 306.0 37.0 307.3 32.0 306.0C27.0 304.7 33.3 304.7 29.0 300.0C24.7 295.3 22.3 295.7 19.0 292.0C15.7 288.3 17.0 291.2 19.0 289.0C21.0 286.8 22.0 289.2 25.0 285.5C28.0 281.8 23.5 280.5 28.0 278.0C32.5 275.5 35.0 278.0 38.5 278.0" stroke="#c8aa7c" stroke-width="1.3"/>
<path d="M37.0 248.0C39.5 250.5 41.5 250.5 44.5 255.5C47.5 260.5 44.5 259.5 46.0 263.0C47.5 266.5 48.0 265.0 49.0 266.0" stroke="#c8aa7c" stroke-width="1.3"/>
<path d="M68.5 267.5C71.0 269.5 72.0 272.5 76.0 273.5C80.0 274.5 78.8 274.3 80.5 270.5C82.2 266.7 81.0 267.0 81.0 262.0C81.0 257.0 82.7 259.7 80.5 255.5C78.3 251.3 76.5 251.5 74.5 249.5" stroke="#c8aa7c" stroke-width="1.3"/>
<path d="M64.0 283.0C64.5 282.3 63.5 282.7 65.5 281.0C67.5 279.3 64.5 276.5 70.0 278.0C75.5 279.5 74.0 283.0 82.0 285.5C90.0 288.0 87.0 287.5 94.0 285.5C101.0 283.5 100.0 281.5 103.0 279.5" stroke="#c8aa7c" stroke-width="1.3"/>
<path d="M88.0 129.0C89.0 131.3 88.3 132.0 91.0 136.0C93.7 140.0 91.7 138.7 96.0 141.0C100.3 143.3 98.3 142.2 104.0 143.0C109.7 143.8 108.7 142.2 113.0 143.5C117.3 144.8 115.7 145.8 117.0 147.0" stroke="#c8aa7c" stroke-width="1.5"/>
<path d="M122.0 170.0C124.0 166.7 127.0 166.7 128.0 160.0C129.0 153.3 124.3 154.7 125.0 150.0C125.7 145.3 125.7 147.5 130.0 146.0C134.3 144.5 132.0 144.5 138.0 145.4C144.0 146.3 144.0 146.1 148.0 148.6C152.0 151.1 151.7 148.2 150.0 153.0C148.3 157.8 146.3 158.8 143.0 163.0C139.7 167.2 138.3 164.2 140.0 165.5C141.7 166.8 142.7 168.8 148.0 167.0C153.3 165.2 149.3 163.1 156.0 160.0C162.7 156.9 161.3 158.9 168.0 157.6C174.7 156.3 171.7 156.9 176.0 156.0C180.3 155.1 179.3 155.3 181.0 155.0" stroke="#c8aa7c" stroke-width="1.4"/>
<path d="M194.0 150.0C195.7 150.2 198.3 148.9 199.0 150.6C199.7 152.3 198.3 152.5 196.0 155.0C193.7 157.5 192.0 155.7 192.0 158.0C192.0 160.3 192.0 158.0 196.0 162.0C200.0 166.0 201.7 165.3 204.0 170.0C206.3 174.7 205.0 172.3 203.0 176.0C201.0 179.7 199.7 179.3 198.0 181.0" stroke="#c8aa7c" stroke-width="1.3"/>
<path d="M204.0 170.0C206.7 172.0 207.3 172.0 212.0 176.0C216.7 180.0 215.3 177.3 218.0 182.0C220.7 186.7 221.3 185.3 220.0 190.0C218.7 194.7 216.0 194.0 214.0 196.0" stroke="#c8aa7c" stroke-width="1.2"/>
<path d="M77.0 137.0C77.2 138.3 77.2 138.0 77.5 141.0C77.8 144.0 77.8 144.3 78.0 146.0" stroke="#dabb8b" stroke-width="2.2"/>
<path d="M38.0 243.0C37.0 241.8 36.7 239.5 35.0 239.5C33.3 239.5 32.3 240.5 33.0 243.0C33.7 245.5 33.7 245.7 37.0 247.0C40.3 248.3 41.0 247.0 43.0 247.0" stroke="#c8aa7c" stroke-width="1.3"/>
<path d="M138.0 339.0C140.7 339.2 140.7 339.6 146.0 339.6C151.3 339.6 151.3 339.2 154.0 339.0" stroke="#dabb8b" stroke-width="1.6"/>
<path d="M226.0 286.0C227.7 281.3 227.7 280.7 231.0 272.0C234.3 263.3 233.3 266.3 236.0 260.0C238.7 253.7 238.0 255.3 239.0 253.0" stroke="#c8aa7c" stroke-width="1.3"/>
<path d="M210.0 287.0C210.0 282.7 209.8 283.0 210.0 274.0C210.2 265.0 210.3 264.7 210.5 260.0" stroke="#c8aa7c" stroke-width="1.3"/>
<path d="M213.0 300.0C216.0 295.3 216.3 296.0 222.0 286.0C227.7 276.0 224.7 280.7 230.0 270.0C235.3 259.3 235.3 259.3 238.0 254.0" stroke="#c8aa7c" stroke-width="1.2"/>
<path d="M231.0 291.0C232.7 290.3 233.0 289.0 236.0 289.0C239.0 289.0 238.7 290.3 240.0 291.0" stroke="#c8aa7c" stroke-width="1.3"/>
<path d="M245.0 289.0C246.7 287.7 246.8 287.3 250.0 285.0C253.2 282.7 253.0 283.0 254.5 282.0" stroke="#dabb8b" stroke-width="1.4"/>
<path d="M164.0 334.0C165.3 336.7 168.3 336.3 168.0 342.0C167.7 347.7 162.3 346.3 163.0 351.0C163.7 355.7 165.7 355.0 170.0 356.0C174.3 357.0 172.7 356.0 176.0 354.0C179.3 352.0 179.0 349.7 180.0 350.0C181.0 350.3 177.0 354.7 179.0 355.0C181.0 355.3 182.7 354.0 186.0 351.0C189.3 348.0 188.3 349.7 189.0 346.0C189.7 342.3 188.7 343.7 188.0 340.0C187.3 336.3 191.0 335.7 187.0 335.0C183.0 334.3 179.7 337.0 176.0 338.0" stroke="#c8aa7c" stroke-width="1.4"/>
<path d="M190.0 330.0C193.3 330.7 195.3 333.3 200.0 332.0C204.7 330.7 202.0 329.3 204.0 326.0C206.0 322.7 202.0 324.3 206.0 322.0C210.0 319.7 212.2 322.3 216.0 319.0C219.8 315.7 218.7 315.7 217.4 312.0C216.1 308.3 211.8 309.8 212.0 308.0C212.2 306.2 214.0 307.3 218.0 306.6C222.0 305.9 221.3 308.2 224.0 306.0C226.7 303.8 225.3 302.0 226.0 300.0" stroke="#c8aa7c" stroke-width="1.3"/>
<path d="M146.0 314.0C146.7 316.0 144.7 317.7 148.0 320.0C151.3 322.3 154.3 318.3 156.0 321.0C157.7 323.7 152.7 324.0 153.0 328.0C153.3 332.0 154.0 330.3 157.0 333.0C160.0 335.7 157.7 334.7 162.0 336.0C166.3 337.3 165.3 337.7 170.0 337.0C174.7 336.3 174.0 335.0 176.0 334.0" stroke="#c8aa7c" stroke-width="1.4"/>
<path d="M132.0 284.0C133.0 286.7 133.7 287.3 135.0 292.0C136.3 296.7 137.0 292.0 136.0 298.0C135.0 304.0 132.7 304.0 132.0 310.0C131.3 316.0 132.0 312.7 134.0 316.0C136.0 319.3 136.7 318.7 138.0 320.0" stroke="#c8aa7c" stroke-width="1.3"/>
<path d="M150.0 276.0C148.7 278.0 146.0 278.0 146.0 282.0C146.0 286.0 148.7 286.0 150.0 288.0" stroke="#c8aa7c" stroke-width="1.3"/>
<path d="M163.0 292.0C164.7 294.0 165.3 292.0 168.0 298.0C170.7 304.0 169.7 302.7 171.0 310.0C172.3 317.3 170.3 314.7 172.0 320.0C173.7 325.3 174.7 324.0 176.0 326.0" stroke="#dabb8b" stroke-width="1.8"/>
<path d="M168.0 296.0C169.3 294.0 170.0 294.7 172.0 290.0C174.0 285.3 171.3 286.7 174.0 282.0C176.7 277.3 174.7 279.3 180.0 276.0C185.3 272.7 186.7 273.3 190.0 272.0" stroke="#c8aa7c" stroke-width="1.3"/>
<path d="M254.0 231.0C252.3 226.7 252.7 221.3 249.0 218.0C245.3 214.7 247.0 220.5 243.0 221.0C239.0 221.5 241.3 220.9 237.0 219.6C232.7 218.3 233.7 217.2 230.0 217.0C226.3 216.8 228.7 220.0 226.0 219.0C223.3 218.0 224.0 216.3 222.0 214.0C220.0 211.7 220.7 212.7 220.0 212.0" stroke="#c8aa7c" stroke-width="1.3"/>
<path d="M255.0 230.0C252.7 232.0 251.7 232.0 248.0 236.0C244.3 240.0 246.0 238.7 244.0 242.0C242.0 245.3 240.7 243.7 242.0 246.0C243.3 248.3 246.7 246.7 248.0 249.0C249.3 251.3 248.3 252.3 246.0 253.0C243.7 253.7 242.7 251.7 241.0 251.0" stroke="#c8aa7c" stroke-width="1.3"/>
<path d="M230.0 217.0C228.7 219.3 225.3 219.7 226.0 224.0C226.7 228.3 227.3 226.7 232.0 230.0C236.7 233.3 234.7 232.0 240.0 234.0C245.3 236.0 245.3 235.3 248.0 236.0" stroke="#c8aa7c" stroke-width="1.2"/>
<path d="M214.0 196.0C216.0 197.3 217.3 196.7 220.0 200.0C222.7 203.3 222.7 202.7 222.0 206.0C221.3 209.3 219.3 208.7 218.0 210.0" stroke="#c8aa7c" stroke-width="1.3"/>
<path d="M226.0 220.0C228.0 221.3 228.7 220.0 232.0 224.0C235.3 228.0 236.0 226.7 236.0 232.0C236.0 237.3 231.3 235.3 232.0 240.0C232.7 244.7 235.3 242.7 238.0 246.0C240.7 249.3 239.3 248.7 240.0 250.0" stroke="#c8aa7c" stroke-width="1.2"/>
<path d="M200.0 230.0C202.7 232.0 203.3 230.7 208.0 236.0C212.7 241.3 209.3 240.7 214.0 246.0C218.7 251.3 216.0 250.7 222.0 252.0C228.0 253.3 226.0 250.3 232.0 250.0C238.0 249.7 237.3 250.7 240.0 251.0" stroke="#c8aa7c" stroke-width="1.2"/>
<path d="M204.0 216.0C206.0 214.7 206.0 212.0 210.0 212.0C214.0 212.0 214.7 212.0 216.0 216.0C217.3 220.0 212.7 219.3 214.0 224.0C215.3 228.7 219.3 225.3 220.0 230.0C220.7 234.7 220.0 233.3 216.0 238.0C212.0 242.7 213.3 239.3 208.0 244.0C202.7 248.7 204.0 246.7 200.0 252.0C196.0 257.3 197.3 257.3 196.0 260.0" stroke="#c8aa7c" stroke-width="1.2"/>
<path d="M130.0 160.0C129.5 163.5 128.0 164.5 128.5 170.5C129.0 176.5 131.0 171.5 131.5 178.0C132.0 184.5 131.5 184.7 130.0 190.0C128.5 195.3 125.5 192.0 127.0 194.0C128.5 196.0 131.0 192.3 134.5 196.0C138.0 199.7 137.0 200.0 137.5 205.0C138.0 210.0 135.5 207.3 136.0 211.0C136.5 214.7 138.0 214.3 139.0 216.0" stroke="#c8aa7c" stroke-width="1.4"/>
<path d="M105.0 229.5C107.3 226.7 107.0 225.0 112.0 221.0C117.0 217.0 113.8 218.2 120.0 217.5C126.2 216.8 125.5 215.0 130.5 219.0C135.5 223.0 132.0 225.0 135.0 229.5C138.0 234.0 138.0 231.5 139.5 232.5" stroke="#c8aa7c" stroke-width="1.4"/>
<path d="M114.0 234.0C116.0 231.7 116.0 230.5 120.0 227.0C124.0 223.5 121.5 224.2 126.0 223.5C130.5 222.8 129.5 223.8 133.5 225.0C137.5 226.2 136.5 226.3 138.0 227.0" stroke="#c8aa7c" stroke-width="1.3"/>
<path d="M127.5 240.0C130.0 240.0 130.5 241.0 135.0 240.0C139.5 239.0 139.0 238.0 141.0 237.0" stroke="#c8aa7c" stroke-width="1.3"/>
<path d="M129.0 252.0C130.3 253.0 130.5 253.5 133.0 255.0C135.5 256.5 135.3 256.0 136.5 256.5" stroke="#c8aa7c" stroke-width="1.4"/>
<path d="M118.0 192.0C120.0 193.3 121.3 192.0 124.0 196.0C126.7 200.0 126.7 198.7 126.0 204.0C125.3 209.3 125.3 208.7 122.0 212.0C118.7 215.3 118.0 213.3 116.0 214.0" stroke="#c8aa7c" stroke-width="1.3"/>
<path d="M120.0 178.0C121.3 180.0 123.3 180.0 124.0 184.0C124.7 188.0 124.7 187.3 122.0 190.0C119.3 192.7 118.0 191.3 116.0 192.0" stroke="#c8aa7c" stroke-width="1.2"/>
<path d="M108.0 258.0C110.7 259.3 110.7 260.0 116.0 262.0C121.3 264.0 119.3 261.3 124.0 264.0C128.7 266.7 127.3 265.3 130.0 270.0C132.7 274.7 131.3 273.3 132.0 278.0C132.7 282.7 132.0 282.0 132.0 284.0" stroke="#c8aa7c" stroke-width="1.3"/>
<path d="M124.0 264.0C123.3 266.7 125.3 268.7 122.0 272.0C118.7 275.3 118.7 274.7 114.0 274.0C109.3 273.3 110.0 271.3 108.0 270.0" stroke="#c8aa7c" stroke-width="1.2"/>
<path d="M140.0 215.0C138.7 217.3 136.7 217.0 136.0 222.0C135.3 227.0 138.0 224.7 138.0 230.0C138.0 235.3 136.0 232.7 136.0 238.0C136.0 243.3 138.0 241.3 138.0 246.0C138.0 250.7 136.7 250.0 136.0 252.0" stroke="#c8aa7c" stroke-width="1.3"/>
<path d="M152.0 178.0C153.3 180.0 152.0 181.3 156.0 184.0C160.0 186.7 158.7 186.0 164.0 186.0C169.3 186.0 167.3 183.3 172.0 184.0C176.7 184.7 174.0 185.3 178.0 188.0C182.0 190.7 182.0 190.7 184.0 192.0" stroke="#c8aa7c" stroke-width="1.2"/>
<path d="M170.0 188.0C172.0 189.3 171.3 188.0 176.0 192.0C180.7 196.0 180.7 194.7 184.0 200.0C187.3 205.3 185.3 205.3 186.0 208.0" stroke="#c8aa7c" stroke-width="1.2"/>
<path d="M182.0 196.0C184.7 196.7 185.3 198.7 190.0 198.0C194.7 197.3 192.7 197.3 196.0 194.0C199.3 190.7 199.3 192.0 200.0 188.0C200.7 184.0 198.7 184.0 198.0 182.0" stroke="#c8aa7c" stroke-width="1.3"/>
<path d="M181.0 228.0C182.7 229.3 184.3 228.0 186.0 232.0C187.7 236.0 187.3 235.3 186.0 240.0C184.7 244.7 184.7 242.0 182.0 246.0C179.3 250.0 179.3 250.0 178.0 252.0" stroke="#c8aa7c" stroke-width="1.2"/>
<path d="M180.0 218.0C182.0 219.3 182.7 218.0 186.0 222.0C189.3 226.0 188.0 224.0 190.0 230.0C192.0 236.0 192.0 233.3 192.0 240.0C192.0 246.7 192.7 244.0 190.0 250.0C187.3 256.0 188.0 254.0 184.0 258.0C180.0 262.0 180.0 260.7 178.0 262.0" stroke="#c8aa7c" stroke-width="1.2"/>
<path d="M176.0 258.0C178.0 259.3 178.7 258.7 182.0 262.0C185.3 265.3 182.7 264.7 186.0 268.0C189.3 271.3 190.0 270.7 192.0 272.0" stroke="#c8aa7c" stroke-width="1.2"/>
<path d="M173.0 271.0C174.7 272.7 174.3 273.0 178.0 276.0C181.7 279.0 180.0 277.3 184.0 280.0C188.0 282.7 188.0 282.7 190.0 284.0" stroke="#c8aa7c" stroke-width="1.2"/>
<path d="M219.5 176.0C221.0 179.0 225.0 179.5 224.0 185.0C223.0 190.5 221.5 190.5 216.5 192.5C211.5 194.5 211.5 191.5 209.0 191.0" stroke="#c8aa7c" stroke-width="1.4"/>
<path d="M198.5 182.0C201.5 182.5 204.3 181.0 207.5 183.5C210.7 186.0 210.5 185.5 208.0 189.5C205.5 193.5 204.0 192.0 200.0 195.5C196.0 199.0 197.3 198.5 196.0 200.0" stroke="#c8aa7c" stroke-width="1.3"/>
<path d="M219.5 206.0C218.0 208.5 215.8 209.5 215.0 213.5C214.2 217.5 216.3 216.5 217.0 218.0" stroke="#c8aa7c" stroke-width="1.3"/>
<path d="M227.0 218.0C230.0 217.7 230.0 216.0 236.0 217.0C242.0 218.0 240.5 220.7 245.0 221.0C249.5 221.3 246.5 215.0 249.5 218.0C252.5 221.0 255.0 224.8 254.0 230.0C253.0 235.2 249.0 232.5 246.5 233.7" stroke="#c8aa7c" stroke-width="1.4"/>
<path d="M225.5 221.0C229.0 222.5 230.5 222.0 236.0 225.5C241.5 229.0 238.0 228.3 242.0 231.5C246.0 234.7 246.0 233.8 248.0 235.0" stroke="#c8aa7c" stroke-width="1.3"/>
<path d="M177.5 213.5C181.0 211.7 182.0 208.0 188.0 208.0C194.0 208.0 191.0 209.2 195.5 213.5C200.0 217.8 198.7 216.2 201.5 221.0C204.3 225.8 203.2 225.7 204.0 228.0" stroke="#c8aa7c" stroke-width="1.3"/>
<path d="M215.0 228.5L224.0 221.0" stroke="#c8aa7c" stroke-width="1.3"/>
<path d="M216.5 233.7C219.7 232.8 220.5 232.2 226.0 231.0C231.5 229.8 230.2 228.3 233.0 230.0C235.8 231.7 235.5 232.0 234.5 236.0C233.5 240.0 231.5 240.0 230.0 242.0" stroke="#c8aa7c" stroke-width="1.3"/>
<path d="M204.0 204.0C202.7 206.0 200.0 206.0 200.0 210.0C200.0 214.0 200.7 213.3 204.0 216.0C207.3 218.7 206.7 215.3 210.0 218.0C213.3 220.7 213.3 219.3 214.0 224.0C214.7 228.7 211.2 228.7 212.0 232.0C212.8 235.3 215.0 233.3 216.5 234.0" stroke="#c8aa7c" stroke-width="1.3"/>
<path d="M134.0 200.0C136.0 198.7 136.0 196.7 140.0 196.0C144.0 195.3 142.7 194.7 146.0 198.0C149.3 201.3 150.0 201.3 150.0 206.0C150.0 210.7 150.0 209.3 146.0 212.0C142.0 214.7 142.7 211.3 138.0 214.0C133.3 216.7 134.0 218.0 132.0 220.0" stroke="#c8aa7c" stroke-width="1.4"/>
<path d="M132.0 220.0C132.7 222.7 131.3 223.3 134.0 228.0C136.7 232.7 136.0 232.7 140.0 234.0C144.0 235.3 142.7 234.7 146.0 232.0C149.3 229.3 146.0 228.7 150.0 226.0C154.0 223.3 155.3 224.7 158.0 224.0" stroke="#c8aa7c" stroke-width="1.3"/>
<path d="M150.0 192.0C152.7 193.3 153.3 192.0 158.0 196.0C162.7 200.0 163.3 198.7 164.0 204.0C164.7 209.3 159.3 208.0 160.0 212.0C160.7 216.0 161.3 216.0 166.0 216.0C170.7 216.0 171.3 213.3 174.0 212.0" stroke="#c8aa7c" stroke-width="1.3"/>
<path d="M160.0 226.0C162.0 228.0 162.0 229.3 166.0 232.0C170.0 234.7 168.0 234.0 172.0 234.0C176.0 234.0 174.0 231.3 178.0 232.0C182.0 232.7 182.0 234.7 184.0 236.0" stroke="#c8aa7c" stroke-width="1.3"/>
<path d="M148.0 234.0C150.0 236.7 149.3 238.7 154.0 242.0C158.7 245.3 156.7 244.0 162.0 244.0C167.3 244.0 165.3 242.0 170.0 242.0C174.7 242.0 172.0 241.3 176.0 244.0C180.0 246.7 180.0 248.0 182.0 250.0" stroke="#c8aa7c" stroke-width="1.3"/>
<path d="M142.0 250.0C144.7 250.7 145.3 249.3 150.0 252.0C154.7 254.7 151.3 256.7 156.0 258.0C160.7 259.3 159.3 255.3 164.0 256.0C168.7 256.7 168.0 258.7 170.0 260.0" stroke="#c8aa7c" stroke-width="1.3"/>
<path d="M178.0 200.0C180.0 202.0 182.7 201.3 184.0 206.0C185.3 210.7 181.3 209.3 182.0 214.0C182.7 218.7 185.3 215.3 186.0 220.0C186.7 224.7 184.7 225.3 184.0 228.0" stroke="#c8aa7c" stroke-width="1.4"/>
<path d="M166.0 196.0C168.0 198.0 168.0 198.7 172.0 202.0C176.0 205.3 174.0 202.7 178.0 206.0C182.0 209.3 180.0 210.7 184.0 212.0C188.0 213.3 188.0 210.7 190.0 210.0" stroke="#c8aa7c" stroke-width="1.3"/>
<path d="M154.0 214.0C156.0 215.3 155.3 218.0 160.0 218.0C164.7 218.0 163.3 213.3 168.0 214.0C172.7 214.7 170.0 216.7 174.0 220.0C178.0 223.3 178.0 222.7 180.0 224.0" stroke="#c8aa7c" stroke-width="1.2"/>
<path d="M134.0 240.0C132.7 242.0 130.0 242.0 130.0 246.0C130.0 250.0 134.0 248.0 134.0 252.0C134.0 256.0 130.0 254.0 130.0 258.0C130.0 262.0 131.3 260.7 134.0 264.0C136.7 267.3 136.7 266.7 138.0 268.0" stroke="#c8aa7c" stroke-width="1.3"/>
<path d="M144.0 272.0C146.0 274.0 145.3 275.3 150.0 278.0C154.7 280.7 152.7 278.0 158.0 280.0C163.3 282.0 162.0 280.7 166.0 284.0C170.0 287.3 168.7 288.0 170.0 290.0" stroke="#c8aa7c" stroke-width="1.3"/>
<path d="M186.0 246.0C187.3 248.7 189.3 248.7 190.0 254.0C190.7 259.3 187.3 257.3 188.0 262.0C188.7 266.7 190.0 264.7 192.0 268.0C194.0 271.3 193.3 270.7 194.0 272.0" stroke="#c8aa7c" stroke-width="1.3"/>
<path d="M196.0 238.0C198.0 240.0 198.7 239.3 202.0 244.0C205.3 248.7 202.7 248.0 206.0 252.0C209.3 256.0 207.3 254.7 212.0 256.0C216.7 257.3 217.3 256.0 220.0 256.0" stroke="#c8aa7c" stroke-width="1.3"/>
<path d="M229.0 289.0C230.0 284.3 229.7 286.3 232.0 275.0C234.3 263.7 234.7 261.7 236.0 255.0" stroke="#c8aa7c" stroke-width="1.2"/>
<path d="M81.8 145.8L80.7 146.4L80.8 148.8L81.8 147.6z" fill="#ba9d6f" stroke="#ba9d6f" stroke-width=".4"/>
<path d="M80.7 146.4L78.7 146.9L78.7 150.2L80.8 148.8z" fill="#b89b6e" stroke="#b89b6e" stroke-width=".4"/>
<path d="M78.7 146.9L75.9 147.4L75.9 151.6L78.7 150.2z" fill="#b5976b" stroke="#b5976b" stroke-width=".4"/>
<path d="M75.9 147.4L72.8 147.8L72.8 152.9L75.9 151.6z" fill="#b09469" stroke="#b09469" stroke-width=".4"/>
<path d="M72.8 147.8L69.9 148.4L69.9 154.2L72.8 152.9z" fill="#b4976b" stroke="#b4976b" stroke-width=".4"/>
<path d="M69.9 148.4L67.6 149.1L67.6 155.4L69.9 154.2z" fill="#b79a6d" stroke="#b79a6d" stroke-width=".4"/>
<path d="M67.6 149.1L66.2 150.0L66.3 156.4L67.6 155.4z" fill="#ba9c6f" stroke="#ba9c6f" stroke-width=".4"/>
<path d="M66.2 150.0L66.1 151.0L66.2 157.1L66.3 156.4z" fill="#bb9d70" stroke="#bb9d70" stroke-width=".4"/>
<path d="M82.3 160.1L81.3 160.7L81.3 163.2L82.4 162.0z" fill="#ba9d6f" stroke="#ba9d6f" stroke-width=".4"/>
<path d="M81.3 160.7L79.1 161.2L79.1 164.5L81.3 163.2z" fill="#b89b6e" stroke="#b89b6e" stroke-width=".4"/>
<path d="M79.1 161.2L76.1 161.7L76.2 165.9L79.1 164.5z" fill="#b5976b" stroke="#b5976b" stroke-width=".4"/>
<path d="M76.1 161.7L72.9 162.2L72.9 167.3L76.2 165.9z" fill="#b09469" stroke="#b09469" stroke-width=".4"/>
<path d="M72.9 162.2L69.8 162.7L69.9 168.6L72.9 167.3z" fill="#b4976b" stroke="#b4976b" stroke-width=".4"/>
<path d="M69.8 162.7L67.4 163.4L67.4 169.7L69.9 168.6z" fill="#b79a6d" stroke="#b79a6d" stroke-width=".4"/>
<path d="M67.4 163.4L66.0 164.3L66.1 170.7L67.4 169.7z" fill="#ba9c6f" stroke="#ba9c6f" stroke-width=".4"/>
<path d="M66.0 164.3L65.8 165.3L65.9 171.5L66.1 170.7z" fill="#bb9d70" stroke="#bb9d70" stroke-width=".4"/>
<path d="M82.9 174.5L81.8 175.1L81.8 177.5L82.9 176.3z" fill="#ba9d6f" stroke="#ba9d6f" stroke-width=".4"/>
<path d="M81.8 175.1L79.5 175.6L79.5 178.8L81.8 177.5z" fill="#b89b6e" stroke="#b89b6e" stroke-width=".4"/>
<path d="M79.5 175.6L76.4 176.1L76.4 180.2L79.5 178.8z" fill="#b5976b" stroke="#b5976b" stroke-width=".4"/>
<path d="M76.4 176.1L73.0 176.5L73.0 181.6L76.4 180.2z" fill="#b09469" stroke="#b09469" stroke-width=".4"/>
<path d="M73.0 176.5L69.7 177.1L69.8 182.9L73.0 181.6z" fill="#b4976b" stroke="#b4976b" stroke-width=".4"/>
<path d="M69.7 177.1L67.2 177.8L67.2 184.1L69.8 182.9z" fill="#b79a6d" stroke="#b79a6d" stroke-width=".4"/>
<path d="M67.2 177.8L65.7 178.6L65.8 185.0L67.2 184.1z" fill="#ba9c6f" stroke="#ba9c6f" stroke-width=".4"/>
<path d="M65.7 178.6L65.6 179.7L65.6 185.8L65.8 185.0z" fill="#bb9d70" stroke="#bb9d70" stroke-width=".4"/>
<path d="M83.5 188.9L82.3 189.5L82.3 191.9L83.5 190.7z" fill="#ba9d6f" stroke="#ba9d6f" stroke-width=".4"/>
<path d="M82.3 189.5L79.9 190.0L79.9 193.2L82.3 191.9z" fill="#b89b6e" stroke="#b89b6e" stroke-width=".4"/>
<path d="M79.9 190.0L76.6 190.4L76.6 194.6L79.9 193.2z" fill="#b5976b" stroke="#b5976b" stroke-width=".4"/>
<path d="M76.6 190.4L73.0 190.9L73.0 196.0L76.6 194.6z" fill="#b09469" stroke="#b09469" stroke-width=".4"/>
<path d="M73.0 190.9L69.6 191.4L69.7 197.2L73.0 196.0z" fill="#b4976b" stroke="#b4976b" stroke-width=".4"/>
<path d="M69.6 191.4L67.0 192.1L67.0 198.4L69.7 197.2z" fill="#b79a6d" stroke="#b79a6d" stroke-width=".4"/>
<path d="M67.0 192.1L65.4 192.9L65.4 199.3L67.0 198.4z" fill="#ba9c6f" stroke="#ba9c6f" stroke-width=".4"/>
<path d="M65.4 192.9L65.3 194.0L65.3 200.1L65.4 199.3z" fill="#bb9d70" stroke="#bb9d70" stroke-width=".4"/>
<path d="M83.9 203.4L82.7 204.0L82.6 206.4L83.9 205.2z" fill="#ba9d6f" stroke="#ba9d6f" stroke-width=".4"/>
<path d="M82.7 204.0L80.1 204.4L80.1 207.7L82.6 206.4z" fill="#b89b6e" stroke="#b89b6e" stroke-width=".4"/>
<path d="M80.1 204.4L76.7 204.8L76.6 209.0L80.1 207.7z" fill="#b5976b" stroke="#b5976b" stroke-width=".4"/>
<path d="M76.7 204.8L73.0 205.2L72.8 210.3L76.6 209.0z" fill="#b09469" stroke="#b09469" stroke-width=".4"/>
<path d="M73.0 205.2L69.4 205.6L69.3 211.5L72.8 210.3z" fill="#b4976b" stroke="#b4976b" stroke-width=".4"/>
<path d="M69.4 205.6L66.6 206.2L66.4 212.5L69.3 211.5z" fill="#b79a6d" stroke="#b79a6d" stroke-width=".4"/>
<path d="M66.6 206.2L65.0 207.0L64.8 213.4L66.4 212.5z" fill="#ba9c6f" stroke="#ba9c6f" stroke-width=".4"/>
<path d="M65.0 207.0L64.8 208.0L64.6 214.1L64.8 213.4z" fill="#bb9d70" stroke="#bb9d70" stroke-width=".4"/>
<path d="M84.0 217.9L82.6 218.5L82.6 220.9L83.9 219.7z" fill="#ba9d6f" stroke="#ba9d6f" stroke-width=".4"/>
<path d="M82.6 218.5L80.0 218.9L79.9 222.1L82.6 220.9z" fill="#b89b6e" stroke="#b89b6e" stroke-width=".4"/>
<path d="M80.0 218.9L76.4 219.2L76.3 223.4L79.9 222.1z" fill="#b5976b" stroke="#b5976b" stroke-width=".4"/>
<path d="M76.4 219.2L72.5 219.5L72.3 224.6L76.3 223.4z" fill="#b09469" stroke="#b09469" stroke-width=".4"/>
<path d="M72.5 219.5L68.8 219.9L68.6 225.8L72.3 224.6z" fill="#b4976b" stroke="#b4976b" stroke-width=".4"/>
<path d="M68.8 219.9L65.8 220.5L65.6 226.8L68.6 225.8z" fill="#b79a6d" stroke="#b79a6d" stroke-width=".4"/>
<path d="M65.8 220.5L64.1 221.3L63.9 227.7L65.6 226.8z" fill="#ba9c6f" stroke="#ba9c6f" stroke-width=".4"/>
<path d="M64.1 221.3L63.9 222.4L63.7 228.5L63.9 227.7z" fill="#bb9d70" stroke="#bb9d70" stroke-width=".4"/>
<path d="M84.1 231.7L82.7 232.2L82.8 234.6L84.2 233.5z" fill="#ba9d6f" stroke="#ba9d6f" stroke-width=".4"/>
<path d="M82.7 232.2L80.0 232.7L80.1 236.0L82.8 234.6z" fill="#b89b6e" stroke="#b89b6e" stroke-width=".4"/>
<path d="M80.0 232.7L76.3 233.3L76.5 237.5L80.1 236.0z" fill="#b5976b" stroke="#b5976b" stroke-width=".4"/>
<path d="M76.3 233.3L72.2 234.0L72.6 239.1L76.5 237.5z" fill="#b09469" stroke="#b09469" stroke-width=".4"/>
<path d="M72.2 234.0L68.3 234.9L68.9 240.8L72.6 239.1z" fill="#b4976b" stroke="#b4976b" stroke-width=".4"/>
<path d="M68.3 234.9L65.3 236.1L66.1 242.3L68.9 240.8z" fill="#b79a6d" stroke="#b79a6d" stroke-width=".4"/>
<path d="M65.3 236.1L63.7 237.3L64.5 243.7L66.1 242.3z" fill="#ba9c6f" stroke="#ba9c6f" stroke-width=".4"/>
<path d="M63.7 237.3L63.6 238.6L64.6 244.7L64.5 243.7z" fill="#bb9d70" stroke="#bb9d70" stroke-width=".4"/>
<path d="M86.0 242.6L84.8 243.5L85.6 245.8L86.6 244.3z" fill="#ba9d6f" stroke="#ba9d6f" stroke-width=".4"/>
<path d="M84.8 243.5L82.2 244.9L83.4 247.9L85.6 245.8z" fill="#b89b6e" stroke="#b89b6e" stroke-width=".4"/>
<path d="M82.2 244.9L78.8 246.6L80.3 250.5L83.4 247.9z" fill="#b5976b" stroke="#b5976b" stroke-width=".4"/>
<path d="M78.8 246.6L75.0 248.5L76.7 253.3L80.3 250.5z" fill="#b09469" stroke="#b09469" stroke-width=".4"/>
<path d="M75.0 248.5L71.4 250.2L73.2 255.7L76.7 253.3z" fill="#b4976b" stroke="#b4976b" stroke-width=".4"/>
<path d="M71.4 250.2L68.6 251.5L70.4 257.6L73.2 255.7z" fill="#b79a6d" stroke="#b79a6d" stroke-width=".4"/>
<path d="M117.5 149.9L117.0 151.9L116.2 156.7L116.6 154.7z" fill="#977a4f" stroke="#977a4f" stroke-width=".4"/>
<path d="M117.0 151.9L115.3 153.6L114.5 158.3L116.2 156.7z" fill="#95784e" stroke="#95784e" stroke-width=".4"/>
<path d="M115.3 153.6L112.7 154.8L111.8 159.5L114.5 158.3z" fill="#8e734a" stroke="#8e734a" stroke-width=".4"/>
<path d="M112.7 154.8L109.4 155.4L108.6 160.1L111.8 159.5z" fill="#866c45" stroke="#866c45" stroke-width=".4"/>
<path d="M109.4 155.4L106.0 155.5L105.2 160.2L108.6 160.1z" fill="#7e6541" stroke="#7e6541" stroke-width=".4"/>
<path d="M106.0 155.5L103.0 155.1L102.2 159.8L105.2 160.2z" fill="#886d46" stroke="#886d46" stroke-width=".4"/>
<path d="M103.0 155.1L100.8 154.4L100.0 159.2L102.2 159.8z" fill="#90744b" stroke="#90744b" stroke-width=".4"/>
<path d="M100.8 154.4L99.8 153.7L99.0 158.4L100.0 159.2z" fill="#95794e" stroke="#95794e" stroke-width=".4"/>
<path d="M115.7 161.2L115.3 163.2L114.4 167.9L114.9 165.9z" fill="#977a4f" stroke="#977a4f" stroke-width=".4"/>
<path d="M115.3 163.2L113.5 164.9L112.7 169.6L114.4 167.9z" fill="#95784e" stroke="#95784e" stroke-width=".4"/>
<path d="M113.5 164.9L110.8 166.1L110.0 170.8L112.7 169.6z" fill="#8e734a" stroke="#8e734a" stroke-width=".4"/>
<path d="M110.8 166.1L107.5 166.7L106.7 171.4L110.0 170.8z" fill="#866c45" stroke="#866c45" stroke-width=".4"/>
<path d="M107.5 166.7L104.0 166.8L103.2 171.5L106.7 171.4z" fill="#7e6541" stroke="#7e6541" stroke-width=".4"/>
<path d="M104.0 166.8L100.9 166.4L100.2 171.1L103.2 171.5z" fill="#886d46" stroke="#886d46" stroke-width=".4"/>
<path d="M100.9 166.4L98.7 165.8L97.9 170.5L100.2 171.1z" fill="#90744b" stroke="#90744b" stroke-width=".4"/>
<path d="M98.7 165.8L97.6 165.0L96.8 169.7L97.9 170.5z" fill="#95794e" stroke="#95794e" stroke-width=".4"/>
<path d="M114.1 172.3L113.6 174.3L112.9 179.0L113.3 177.0z" fill="#977a4f" stroke="#977a4f" stroke-width=".4"/>
<path d="M113.6 174.3L111.9 176.0L111.2 180.8L112.9 179.0z" fill="#95784e" stroke="#95784e" stroke-width=".4"/>
<path d="M111.9 176.0L109.2 177.3L108.5 182.0L111.2 180.8z" fill="#8e734a" stroke="#8e734a" stroke-width=".4"/>
<path d="M109.2 177.3L105.8 178.0L105.1 182.8L108.5 182.0z" fill="#866c45" stroke="#866c45" stroke-width=".4"/>
<path d="M105.8 178.0L102.2 178.2L101.6 182.9L105.1 182.8z" fill="#7e6541" stroke="#7e6541" stroke-width=".4"/>
<path d="M102.2 178.2L99.1 177.9L98.4 182.7L101.6 182.9z" fill="#886d46" stroke="#886d46" stroke-width=".4"/>
<path d="M99.1 177.9L96.7 177.3L96.1 182.1L98.4 182.7z" fill="#90744b" stroke="#90744b" stroke-width=".4"/>
<path d="M96.7 177.3L95.6 176.6L95.0 181.4L96.1 182.1z" fill="#95794e" stroke="#95794e" stroke-width=".4"/>
<path d="M112.8 183.1L112.4 185.2L112.0 190.0L112.3 187.9z" fill="#977a4f" stroke="#977a4f" stroke-width=".4"/>
<path d="M112.4 185.2L110.8 187.1L110.3 191.8L112.0 190.0z" fill="#95784e" stroke="#95784e" stroke-width=".4"/>
<path d="M110.8 187.1L108.0 188.5L107.6 193.3L110.3 191.8z" fill="#8e734a" stroke="#8e734a" stroke-width=".4"/>
<path d="M108.0 188.5L104.6 189.4L104.1 194.1L107.6 193.3z" fill="#866c45" stroke="#866c45" stroke-width=".4"/>
<path d="M104.6 189.4L101.0 189.7L100.5 194.5L104.1 194.1z" fill="#7e6541" stroke="#7e6541" stroke-width=".4"/>
<path d="M101.0 189.7L97.7 189.5L97.2 194.3L100.5 194.5z" fill="#886d46" stroke="#886d46" stroke-width=".4"/>
<path d="M97.7 189.5L95.3 188.9L94.8 193.7L97.2 194.3z" fill="#90744b" stroke="#90744b" stroke-width=".4"/>
<path d="M95.3 188.9L94.1 188.2L93.7 192.9L94.8 193.7z" fill="#95794e" stroke="#95794e" stroke-width=".4"/>
<path d="M111.9 194.5L111.6 196.7L111.0 201.5L111.4 199.3z" fill="#977a4f" stroke="#977a4f" stroke-width=".4"/>
<path d="M111.6 196.7L109.8 198.6L109.3 203.3L111.0 201.5z" fill="#95784e" stroke="#95784e" stroke-width=".4"/>
<path d="M109.8 198.6L107.0 200.0L106.4 204.8L109.3 203.3z" fill="#8e734a" stroke="#8e734a" stroke-width=".4"/>
<path d="M107.0 200.0L103.4 200.8L102.9 205.6L106.4 204.8z" fill="#866c45" stroke="#866c45" stroke-width=".4"/>
<path d="M103.4 200.8L99.7 201.0L99.1 205.8L102.9 205.6z" fill="#7e6541" stroke="#7e6541" stroke-width=".4"/>
<path d="M99.7 201.0L96.4 200.7L95.8 205.5L99.1 205.8z" fill="#886d46" stroke="#886d46" stroke-width=".4"/>
<path d="M96.4 200.7L93.9 200.0L93.3 204.8L95.8 205.5z" fill="#90744b" stroke="#90744b" stroke-width=".4"/>
<path d="M93.9 200.0L92.8 199.1L92.1 203.9L93.3 204.8z" fill="#95794e" stroke="#95794e" stroke-width=".4"/>
<path d="M110.7 206.6L110.1 208.8L109.2 213.5L109.8 211.3z" fill="#977a4f" stroke="#977a4f" stroke-width=".4"/>
<path d="M110.1 208.8L108.2 210.5L107.3 215.2L109.2 213.5z" fill="#95784e" stroke="#95784e" stroke-width=".4"/>
<path d="M108.2 210.5L105.2 211.7L104.3 216.4L107.3 215.2z" fill="#8e734a" stroke="#8e734a" stroke-width=".4"/>
<path d="M105.2 211.7L101.5 212.3L100.5 217.0L104.3 216.4z" fill="#866c45" stroke="#866c45" stroke-width=".4"/>
<path d="M101.5 212.3L97.7 212.1L96.7 216.8L100.5 217.0z" fill="#7e6541" stroke="#7e6541" stroke-width=".4"/>
<path d="M97.7 212.1L94.3 211.5L93.3 216.2L96.7 216.8z" fill="#886d46" stroke="#886d46" stroke-width=".4"/>
<path d="M94.3 211.5L91.9 210.6L90.9 215.3L93.3 216.2z" fill="#90744b" stroke="#90744b" stroke-width=".4"/>
<path d="M91.9 210.6L90.8 209.6L89.8 214.3L90.9 215.3z" fill="#95794e" stroke="#95794e" stroke-width=".4"/>
<path d="M108.6 218.1L107.9 220.3L106.9 224.9L107.5 222.8z" fill="#977a4f" stroke="#977a4f" stroke-width=".4"/>
<path d="M107.9 220.3L105.9 222.0L104.9 226.6L106.9 224.9z" fill="#95784e" stroke="#95784e" stroke-width=".4"/>
<path d="M105.9 222.0L102.8 223.1L101.8 227.7L104.9 226.6z" fill="#8e734a" stroke="#8e734a" stroke-width=".4"/>
<path d="M102.8 223.1L99.1 223.5L98.0 228.2L101.8 227.7z" fill="#866c45" stroke="#866c45" stroke-width=".4"/>
<path d="M99.1 223.5L95.2 223.3L94.2 228.0L98.0 228.2z" fill="#7e6541" stroke="#7e6541" stroke-width=".4"/>
<path d="M95.2 223.3L91.7 222.7L90.7 227.4L94.2 228.0z" fill="#886d46" stroke="#886d46" stroke-width=".4"/>
<path d="M91.7 222.7L89.2 221.8L88.3 226.5L90.7 227.4z" fill="#90744b" stroke="#90744b" stroke-width=".4"/>
<path d="M89.2 221.8L88.0 220.9L87.1 225.6L88.3 226.5z" fill="#95794e" stroke="#95794e" stroke-width=".4"/>
<path d="M106.5 228.6L106.1 230.8L105.4 235.5L105.8 233.4z" fill="#977a4f" stroke="#977a4f" stroke-width=".4"/>
<path d="M106.1 230.8L104.1 232.6L103.5 237.4L105.4 235.5z" fill="#95784e" stroke="#95784e" stroke-width=".4"/>
<path d="M104.1 232.6L101.1 234.0L100.4 238.7L103.5 237.4z" fill="#8e734a" stroke="#8e734a" stroke-width=".4"/>
<path d="M101.1 234.0L97.3 234.7L96.6 239.5L100.4 238.7z" fill="#866c45" stroke="#866c45" stroke-width=".4"/>
<path d="M97.3 234.7L93.3 234.8L92.6 239.6L96.6 239.5z" fill="#7e6541" stroke="#7e6541" stroke-width=".4"/>
<path d="M93.3 234.8L89.7 234.4L89.1 239.2L92.6 239.6z" fill="#886d46" stroke="#886d46" stroke-width=".4"/>
<path d="M89.7 234.4L87.1 233.7L86.5 238.4L89.1 239.2z" fill="#90744b" stroke="#90744b" stroke-width=".4"/>
<path d="M87.1 233.7L85.9 232.8L85.2 237.5L86.5 238.4z" fill="#95794e" stroke="#95794e" stroke-width=".4"/>
<path d="M95.6 243.4L95.0 243.5L96.1 247.6L96.7 247.4z" fill="#967a4f" stroke="#967a4f" stroke-width=".4"/>
<path d="M95.0 243.5L93.4 244.1L94.4 248.1L96.1 247.6z" fill="#92764c" stroke="#92764c" stroke-width=".4"/>
<path d="M93.4 244.1L91.1 245.1L92.1 249.2L94.4 248.1z" fill="#8b7048" stroke="#8b7048" stroke-width=".4"/>
<path d="M91.1 245.1L88.4 246.5L89.5 250.6L92.1 249.2z" fill="#816842" stroke="#816842" stroke-width=".4"/>
<path d="M88.4 246.5L85.9 248.3L87.0 252.4L89.5 250.6z" fill="#836943" stroke="#836943" stroke-width=".4"/>
<path d="M85.9 248.3L83.9 250.3L85.0 254.3L87.0 252.4z" fill="#8c7149" stroke="#8c7149" stroke-width=".4"/>
<path d="M83.9 250.3L82.9 252.3L84.0 256.3L85.0 254.3z" fill="#93774d" stroke="#93774d" stroke-width=".4"/>
<path d="M82.9 252.3L82.9 254.1L84.0 258.1L84.0 256.3z" fill="#977a4f" stroke="#977a4f" stroke-width=".4"/>
<path d="M99.0 256.3L98.2 256.5L99.5 260.5L100.3 260.3z" fill="#96794f" stroke="#96794f" stroke-width=".4"/>
<path d="M98.2 256.5L96.5 257.2L97.8 261.2L99.5 260.5z" fill="#91754c" stroke="#91754c" stroke-width=".4"/>
<path d="M96.5 257.2L94.1 258.4L95.4 262.4L97.8 261.2z" fill="#896f47" stroke="#896f47" stroke-width=".4"/>
<path d="M94.1 258.4L91.5 260.1L92.9 264.0L95.4 262.4z" fill="#7f6641" stroke="#7f6641" stroke-width=".4"/>
<path d="M91.5 260.1L89.2 262.0L90.6 266.0L92.9 264.0z" fill="#846b44" stroke="#846b44" stroke-width=".4"/>
<path d="M89.2 262.0L87.5 264.2L88.9 268.1L90.6 266.0z" fill="#8d724a" stroke="#8d724a" stroke-width=".4"/>
<path d="M87.5 264.2L86.8 266.2L88.2 270.2L88.9 268.1z" fill="#94784d" stroke="#94784d" stroke-width=".4"/>
<path d="M86.8 266.2L87.1 268.0L88.5 271.9L88.2 270.2z" fill="#977a4f" stroke="#977a4f" stroke-width=".4"/>
<path d="M103.2 268.6L102.3 269.0L103.8 272.9L104.8 272.6z" fill="#95794e" stroke="#95794e" stroke-width=".4"/>
<path d="M102.3 269.0L100.5 270.0L102.0 273.8L103.8 272.9z" fill="#90744b" stroke="#90744b" stroke-width=".4"/>
<path d="M100.5 270.0L98.1 271.4L99.7 275.3L102.0 273.8z" fill="#886d46" stroke="#886d46" stroke-width=".4"/>
<path d="M98.1 271.4L95.7 273.3L97.3 277.2L99.7 275.3z" fill="#7d6540" stroke="#7d6540" stroke-width=".4"/>
<path d="M95.7 273.3L93.6 275.5L95.2 279.4L97.3 277.2z" fill="#866c45" stroke="#866c45" stroke-width=".4"/>
<path d="M93.6 275.5L92.2 277.8L93.9 281.6L95.2 279.4z" fill="#8f734a" stroke="#8f734a" stroke-width=".4"/>
<path d="M92.2 277.8L91.8 279.9L93.5 283.7L93.9 281.6z" fill="#95784e" stroke="#95784e" stroke-width=".4"/>
<path d="M91.8 279.9L92.5 281.6L94.3 285.4L93.5 283.7z" fill="#977a4f" stroke="#977a4f" stroke-width=".4"/>
<path d="M108.3 280.5L108.3 280.5L110.2 284.2L110.3 284.2z" fill="#977a4f" stroke="#977a4f" stroke-width=".4"/>
<path d="M108.3 280.5L107.2 281.1L109.2 284.8L110.2 284.2z" fill="#95784e" stroke="#95784e" stroke-width=".4"/>
<path d="M107.2 281.1L105.5 282.3L107.4 286.0L109.2 284.8z" fill="#8f734a" stroke="#8f734a" stroke-width=".4"/>
<path d="M105.5 282.3L103.3 284.1L105.2 287.8L107.4 286.0z" fill="#866c45" stroke="#866c45" stroke-width=".4"/>
<path d="M103.3 284.1L101.1 286.2L103.0 289.9L105.2 287.8z" fill="#7d6540" stroke="#7d6540" stroke-width=".4"/>
<path d="M101.1 286.2L99.3 288.5L101.2 292.3L103.0 289.9z" fill="#886d46" stroke="#886d46" stroke-width=".4"/>
<path d="M40.0 264.9L39.4 265.6L44.4 264.7L44.9 264.0z" fill="#b89a6d" stroke="#b89a6d" stroke-width=".4"/>
<path d="M39.4 265.6L39.3 267.3L44.3 266.4L44.4 264.7z" fill="#b6986b" stroke="#b6986b" stroke-width=".4"/>
<path d="M39.3 267.3L39.8 269.6L44.7 268.7L44.3 266.4z" fill="#b29569" stroke="#b29569" stroke-width=".4"/>
<path d="M39.8 269.6L41.0 272.2L45.9 271.2L44.7 268.7z" fill="#ad9166" stroke="#ad9166" stroke-width=".4"/>
<path d="M41.0 272.2L42.8 274.6L47.6 273.6L45.9 271.2z" fill="#ae9267" stroke="#ae9267" stroke-width=".4"/>
<path d="M42.8 274.6L45.0 276.5L49.9 275.4L47.6 273.6z" fill="#b3966a" stroke="#b3966a" stroke-width=".4"/>
<path d="M45.0 276.5L47.5 277.4L52.4 276.2L49.9 275.4z" fill="#b6996c" stroke="#b6996c" stroke-width=".4"/>
<path d="M47.5 277.4L50.0 277.2L54.8 276.0L52.4 276.2z" fill="#b89a6d" stroke="#b89a6d" stroke-width=".4"/>
<path d="M52.3 262.2L51.9 263.1L56.6 261.6L57.0 260.6z" fill="#b89a6d" stroke="#b89a6d" stroke-width=".4"/>
<path d="M51.9 263.1L52.1 264.9L56.8 263.3L56.6 261.6z" fill="#b5986b" stroke="#b5986b" stroke-width=".4"/>
<path d="M52.1 264.9L53.0 267.3L57.7 265.6L56.8 263.3z" fill="#b19569" stroke="#b19569" stroke-width=".4"/>
<path d="M53.0 267.3L54.6 269.7L59.3 267.9L57.7 265.6z" fill="#ac9166" stroke="#ac9166" stroke-width=".4"/>
<path d="M54.6 269.7L56.9 271.8L61.5 269.9L59.3 267.9z" fill="#af9367" stroke="#af9367" stroke-width=".4"/>
<path d="M56.9 271.8L59.5 273.1L64.1 271.2L61.5 269.9z" fill="#b3966a" stroke="#b3966a" stroke-width=".4"/>
<path d="M59.5 273.1L62.2 273.4L66.8 271.4L64.1 271.2z" fill="#b7996c" stroke="#b7996c" stroke-width=".4"/>
<path d="M62.2 273.4L64.7 272.6L69.2 270.4L66.8 271.4z" fill="#b89a6d" stroke="#b89a6d" stroke-width=".4"/>
<path d="M60.8 260.7L61.5 262.1L63.3 257.4L62.9 256.2z" fill="#b89a6c" stroke="#b89a6c" stroke-width=".4"/>
<path d="M61.5 262.1L63.3 263.3L64.8 258.5L63.3 257.4z" fill="#b5986b" stroke="#b5986b" stroke-width=".4"/>
<path d="M63.3 263.3L65.9 264.0L67.3 259.2L64.8 258.5z" fill="#b19468" stroke="#b19468" stroke-width=".4"/>
<path d="M65.9 264.0L68.8 264.0L70.1 259.2L67.3 259.2z" fill="#ac9066" stroke="#ac9066" stroke-width=".4"/>
<path d="M68.8 264.0L71.4 263.4L72.9 258.7L70.1 259.2z" fill="#b09368" stroke="#b09368" stroke-width=".4"/>
<path d="M71.4 263.4L73.7 262.4L75.4 257.7L72.9 258.7z" fill="#b4976a" stroke="#b4976a" stroke-width=".4"/>
<path d="M51.3 308.1L53.6 308.0L55.2 303.3L53.0 303.4z" fill="#cdaf80" stroke="#cdaf80" stroke-width=".4"/>
<path d="M53.6 308.0L55.5 307.7L56.9 302.9L55.2 303.3z" fill="#ceb081" stroke="#ceb081" stroke-width=".4"/>
<path d="M55.5 307.7L56.7 307.2L58.1 302.4L56.9 302.9z" fill="#cfb081" stroke="#cfb081" stroke-width=".4"/>
<path d="M56.7 307.2L57.3 306.7L58.7 301.9L58.1 302.4z" fill="#cfb182" stroke="#cfb182" stroke-width=".4"/>
<path d="M48.2 290.9L49.8 290.1L54.4 288.0L52.4 288.2z" fill="#cfb182" stroke="#cfb182" stroke-width=".4"/>
<path d="M49.8 290.1L51.5 290.2L56.3 288.8L54.4 288.0z" fill="#cfb081" stroke="#cfb081" stroke-width=".4"/>
<path d="M51.5 290.2L53.0 291.3L58.0 290.3L56.3 288.8z" fill="#ceb081" stroke="#ceb081" stroke-width=".4"/>
<path d="M53.0 291.3L54.3 293.0L59.3 292.4L58.0 290.3z" fill="#cdaf80" stroke="#cdaf80" stroke-width=".4"/>
<path d="M54.3 293.0L55.3 295.0L60.3 294.8L59.3 292.4z" fill="#ccae80" stroke="#ccae80" stroke-width=".4"/>
<path d="M55.3 295.0L56.1 297.2L61.1 297.1L60.3 294.8z" fill="#ccae80" stroke="#ccae80" stroke-width=".4"/>
<path d="M56.1 297.2L56.7 299.2L61.7 299.3L61.1 297.1z" fill="#cdaf80" stroke="#cdaf80" stroke-width=".4"/>
<path d="M56.7 299.2L57.3 300.8L62.3 300.9L61.7 299.3z" fill="#ceb081" stroke="#ceb081" stroke-width=".4"/>
<path d="M57.3 300.8L58.0 301.9L63.0 302.0L62.3 300.9z" fill="#cfb081" stroke="#cfb081" stroke-width=".4"/>
<path d="M58.0 301.9L58.7 302.2L63.7 302.4L63.0 302.0z" fill="#cfb182" stroke="#cfb182" stroke-width=".4"/>
<path d="M66.7 287.6L67.4 288.0L72.4 288.3L71.7 287.9z" fill="#cfb182" stroke="#cfb182" stroke-width=".4"/>
<path d="M67.4 288.0L68.2 289.1L73.1 289.4L72.4 288.3z" fill="#cfb081" stroke="#cfb081" stroke-width=".4"/>
<path d="M68.2 289.1L68.8 290.8L73.8 291.1L73.1 289.4z" fill="#ceb081" stroke="#ceb081" stroke-width=".4"/>
<path d="M68.8 290.8L69.4 292.9L74.4 293.2L73.8 291.1z" fill="#cdaf80" stroke="#cdaf80" stroke-width=".4"/>
<path d="M69.4 292.9L70.0 295.2L75.0 295.5L74.4 293.2z" fill="#ccae80" stroke="#ccae80" stroke-width=".4"/>
<path d="M70.0 295.2L70.6 297.5L75.6 297.9L75.0 295.5z" fill="#ccae80" stroke="#ccae80" stroke-width=".4"/>
<path d="M70.6 297.5L71.1 299.6L76.1 300.0L75.6 297.9z" fill="#cdaf80" stroke="#cdaf80" stroke-width=".4"/>
<path d="M71.1 299.6L71.7 301.3L76.7 301.7L76.1 300.0z" fill="#ceb081" stroke="#ceb081" stroke-width=".4"/>
<path d="M71.7 301.3L72.4 302.4L77.3 302.8L76.7 301.7z" fill="#cfb081" stroke="#cfb081" stroke-width=".4"/>
<path d="M72.4 302.4L73.1 302.8L78.0 303.2L77.3 302.8z" fill="#cfb182" stroke="#cfb182" stroke-width=".4"/>
<path d="M81.7 288.7L82.4 289.2L87.4 289.7L86.7 289.2z" fill="#cfb182" stroke="#cfb182" stroke-width=".4"/>
<path d="M82.4 289.2L83.1 290.3L88.1 290.8L87.4 289.7z" fill="#cfb081" stroke="#cfb081" stroke-width=".4"/>
<path d="M83.1 290.3L83.7 292.0L88.6 292.5L88.1 290.8z" fill="#ceb081" stroke="#ceb081" stroke-width=".4"/>
<path d="M83.7 292.0L84.2 294.1L89.2 294.6L88.6 292.5z" fill="#cdaf80" stroke="#cdaf80" stroke-width=".4"/>
<path d="M84.2 294.1L84.7 296.4L89.6 297.0L89.2 294.6z" fill="#ccae80" stroke="#ccae80" stroke-width=".4"/>
<path d="M84.7 296.4L85.1 298.8L90.1 299.4L89.6 297.0z" fill="#ccae80" stroke="#ccae80" stroke-width=".4"/>
<path d="M85.1 298.8L85.6 300.9L90.5 301.5L90.1 299.4z" fill="#cdaf80" stroke="#cdaf80" stroke-width=".4"/>
<path d="M85.6 300.9L86.1 302.6L91.0 303.3L90.5 301.5z" fill="#ceb081" stroke="#ceb081" stroke-width=".4"/>
<path d="M86.1 302.6L86.6 303.7L91.5 304.4L91.0 303.3z" fill="#cfb081" stroke="#cfb081" stroke-width=".4"/>
<path d="M86.6 303.7L87.2 304.1L92.1 304.9L91.5 304.4z" fill="#cfb182" stroke="#cfb182" stroke-width=".4"/>
<path d="M97.4 290.9L98.0 291.4L102.9 292.7L102.2 292.1z" fill="#cfb182" stroke="#cfb182" stroke-width=".4"/>
<path d="M98.0 291.4L98.6 292.6L103.4 293.9L102.9 292.7z" fill="#cfb081" stroke="#cfb081" stroke-width=".4"/>
<path d="M98.6 292.6L98.9 294.4L103.7 295.7L103.4 293.9z" fill="#ceb081" stroke="#ceb081" stroke-width=".4"/>
<path d="M98.9 294.4L99.1 296.6L103.9 298.0L103.7 295.7z" fill="#cdaf80" stroke="#cdaf80" stroke-width=".4"/>
<path d="M99.1 296.6L99.2 299.0L104.0 300.4L103.9 298.0z" fill="#ccae80" stroke="#ccae80" stroke-width=".4"/>
<path d="M99.2 299.0L99.2 301.3L104.0 302.8L104.0 300.4z" fill="#ccae80" stroke="#ccae80" stroke-width=".4"/>
<path d="M99.2 301.3L99.2 303.5L104.0 305.0L104.0 302.8z" fill="#cdaf80" stroke="#cdaf80" stroke-width=".4"/>
<path d="M99.2 303.5L99.4 305.2L104.1 306.8L104.0 305.0z" fill="#ceb081" stroke="#ceb081" stroke-width=".4"/>
<path d="M99.4 305.2L99.7 306.4L104.4 308.0L104.1 306.8z" fill="#cfb081" stroke="#cfb081" stroke-width=".4"/>
<path d="M99.7 306.4L100.1 306.9L104.8 308.6L104.4 308.0z" fill="#cfb182" stroke="#cfb182" stroke-width=".4"/>
<path d="M113.1 296.2L113.7 296.9L118.0 299.4L117.5 298.6z" fill="#cfb182" stroke="#cfb182" stroke-width=".4"/>
<path d="M113.7 296.9L113.9 298.2L118.2 300.7L118.0 299.4z" fill="#cfb081" stroke="#cfb081" stroke-width=".4"/>
<path d="M113.9 298.2L113.7 300.0L118.0 302.6L118.2 300.7z" fill="#ceb081" stroke="#ceb081" stroke-width=".4"/>
<path d="M113.7 300.0L113.3 302.1L117.6 304.8L118.0 302.6z" fill="#cdaf80" stroke="#cdaf80" stroke-width=".4"/>
<path d="M113.3 302.1L112.8 304.5L117.0 307.1L117.6 304.8z" fill="#ccae80" stroke="#ccae80" stroke-width=".4"/>
<path d="M112.8 304.5L112.2 306.7L116.4 309.5L117.0 307.1z" fill="#ccae80" stroke="#ccae80" stroke-width=".4"/>
<path d="M112.2 306.7L111.6 308.8L115.8 311.6L116.4 309.5z" fill="#cdaf80" stroke="#cdaf80" stroke-width=".4"/>
<path d="M111.6 308.8L111.3 310.5L115.4 313.4L115.8 311.6z" fill="#ceb081" stroke="#ceb081" stroke-width=".4"/>
<path d="M111.3 310.5L111.3 311.8L115.4 314.6L115.4 313.4z" fill="#cfb081" stroke="#cfb081" stroke-width=".4"/>
<path d="M111.3 311.8L111.6 312.4L115.7 315.3L115.4 314.6z" fill="#cfb182" stroke="#cfb182" stroke-width=".4"/>
<path d="M126.8 305.3L127.2 306.1L130.8 309.6L130.5 308.7z" fill="#cfb182" stroke="#cfb182" stroke-width=".4"/>
<path d="M127.2 306.1L127.1 307.4L130.7 310.9L130.8 309.6z" fill="#cfb081" stroke="#cfb081" stroke-width=".4"/>
<path d="M127.1 307.4L126.5 309.1L130.1 312.7L130.7 310.9z" fill="#ceb081" stroke="#ceb081" stroke-width=".4"/>
<path d="M126.5 309.1L125.7 311.1L129.2 314.7L130.1 312.7z" fill="#cdaf80" stroke="#cdaf80" stroke-width=".4"/>
<path d="M125.7 311.1L124.6 313.2L128.0 316.8L129.2 314.7z" fill="#ccae80" stroke="#ccae80" stroke-width=".4"/>
<path d="M124.6 313.2L123.4 315.3L126.8 319.0L128.0 316.8z" fill="#ccae80" stroke="#ccae80" stroke-width=".4"/>
<path d="M123.4 315.3L122.4 317.2L125.8 320.9L126.8 319.0z" fill="#cdaf80" stroke="#cdaf80" stroke-width=".4"/>
<path d="M122.4 317.2L121.7 318.8L125.0 322.5L125.8 320.9z" fill="#ceb081" stroke="#ceb081" stroke-width=".4"/>
<path d="M121.7 318.8L121.3 320.0L124.6 323.7L125.0 322.5z" fill="#cfb081" stroke="#cfb081" stroke-width=".4"/>
<path d="M121.3 320.0L121.5 320.7L124.7 324.5L124.6 323.7z" fill="#cfb182" stroke="#cfb182" stroke-width=".4"/>
<path d="M138.3 317.9L138.4 318.8L140.8 323.2L140.7 322.2z" fill="#cfb182" stroke="#cfb182" stroke-width=".4"/>
<path d="M138.4 318.8L138.0 320.1L140.2 324.5L140.8 323.2z" fill="#cfb081" stroke="#cfb081" stroke-width=".4"/>
<path d="M138.0 320.1L136.9 321.5L139.1 326.0L140.2 324.5z" fill="#ceb081" stroke="#ceb081" stroke-width=".4"/>
<path d="M136.9 321.5L135.4 323.1L137.5 327.7L139.1 326.0z" fill="#cdaf80" stroke="#cdaf80" stroke-width=".4"/>
<path d="M135.4 323.1L133.7 324.7L135.7 329.3L137.5 327.7z" fill="#ccae80" stroke="#ccae80" stroke-width=".4"/>
<path d="M133.7 324.7L131.9 326.3L133.9 330.9L135.7 329.3z" fill="#ccae80" stroke="#ccae80" stroke-width=".4"/>
<path d="M131.9 326.3L130.3 327.7L132.2 332.3L133.9 330.9z" fill="#cdaf80" stroke="#cdaf80" stroke-width=".4"/>
<path d="M130.3 327.7L129.1 328.9L130.9 333.6L132.2 332.3z" fill="#ceb081" stroke="#ceb081" stroke-width=".4"/>
<path d="M129.1 328.9L128.4 329.9L130.1 334.6L130.9 333.6z" fill="#cfb081" stroke="#cfb081" stroke-width=".4"/>
<path d="M128.4 329.9L128.3 330.6L130.0 335.3L130.1 334.6z" fill="#cfb182" stroke="#cfb182" stroke-width=".4"/>
<path d="M145.1 334.5L144.7 335.2L145.1 340.2L145.4 339.5z" fill="#cfb182" stroke="#cfb182" stroke-width=".4"/>
<path d="M144.7 335.2L143.7 335.9L144.2 340.9L145.1 340.2z" fill="#cfb081" stroke="#cfb081" stroke-width=".4"/>
<path d="M142.5 308.8L143.0 310.6L147.3 311.8L146.7 310.0z" fill="#896f47" stroke="#896f47" stroke-width=".4"/>
<path d="M143.0 310.6L143.7 311.9L147.9 313.2L147.3 311.8z" fill="#91754c" stroke="#91754c" stroke-width=".4"/>
<path d="M143.7 311.9L144.6 312.7L148.8 313.9L147.9 313.2z" fill="#96794f" stroke="#96794f" stroke-width=".4"/>
<path d="M154.9 306.0L155.9 306.6L160.1 307.6L159.2 307.1z" fill="#977a4f" stroke="#977a4f" stroke-width=".4"/>
<path d="M155.9 306.6L156.6 307.8L160.9 308.8L160.1 307.6z" fill="#93774d" stroke="#93774d" stroke-width=".4"/>
<path d="M156.6 307.8L157.3 309.5L161.6 310.5L160.9 308.8z" fill="#8b7148" stroke="#8b7148" stroke-width=".4"/>
<path d="M157.3 309.5L157.9 311.5L162.1 312.5L161.6 310.5z" fill="#826943" stroke="#826943" stroke-width=".4"/>
<path d="M148.6 288.6L148.9 290.4L152.9 291.7L152.6 290.0z" fill="#8a6f47" stroke="#8a6f47" stroke-width=".4"/>
<path d="M148.9 290.4L149.5 291.7L153.5 293.0L152.9 291.7z" fill="#92764c" stroke="#92764c" stroke-width=".4"/>
<path d="M149.5 291.7L150.2 292.4L154.2 293.7L153.5 293.0z" fill="#96794f" stroke="#96794f" stroke-width=".4"/>
<path d="M159.8 286.3L160.5 287.0L164.5 288.3L163.8 287.6z" fill="#96794f" stroke="#96794f" stroke-width=".4"/>
<path d="M160.5 287.0L161.1 288.3L165.1 289.6L164.5 288.3z" fill="#92764c" stroke="#92764c" stroke-width=".4"/>
<path d="M161.1 288.3L161.4 290.0L165.4 291.4L165.1 289.6z" fill="#8a6f47" stroke="#8a6f47" stroke-width=".4"/>
<path d="M192.1 292.2L192.3 292.7L195.5 294.0L195.3 293.4z" fill="#96794f" stroke="#96794f" stroke-width=".4"/>
<path d="M192.3 292.7L192.3 293.7L195.5 295.0L195.5 294.0z" fill="#91754c" stroke="#91754c" stroke-width=".4"/>
<path d="M192.3 293.7L192.2 295.1L195.4 296.3L195.5 295.0z" fill="#896e47" stroke="#896e47" stroke-width=".4"/>
<path d="M192.2 295.1L192.0 296.5L195.2 297.8L195.4 296.3z" fill="#7e6641" stroke="#7e6641" stroke-width=".4"/>
<path d="M192.0 296.5L191.9 297.9L195.0 299.2L195.2 297.8z" fill="#856b45" stroke="#856b45" stroke-width=".4"/>
<path d="M191.9 297.9L191.8 299.1L195.0 300.3L195.0 299.2z" fill="#8e734a" stroke="#8e734a" stroke-width=".4"/>
<path d="M191.8 299.1L192.0 299.8L195.1 301.0L195.0 300.3z" fill="#95784e" stroke="#95784e" stroke-width=".4"/>
<path d="M192.0 299.8L192.3 299.9L195.5 301.2L195.1 301.0z" fill="#977a4f" stroke="#977a4f" stroke-width=".4"/>
<path d="M84.5 129.0L77.0 137.0" stroke="#987b50" stroke-width="5.6" stroke-linecap="butt"/>
<path d="M84.5 129.0L77.0 137.0" stroke="#ecd4a2" stroke-width="4.6" stroke-linecap="butt"/>
<ellipse cx="47.5" cy="243" rx="4.6" ry="7" transform="rotate(-18 47.5 243)" stroke="#987b50" stroke-width="3.9"/>
<ellipse cx="47.5" cy="243" rx="4.6" ry="7" transform="rotate(-18 47.5 243)" stroke="#ecd4a2" stroke-width="3"/>
<ellipse cx="58" cy="246.5" rx="4.6" ry="7" transform="rotate(-18 58 246.5)" stroke="#987b50" stroke-width="3.9"/>
<ellipse cx="58" cy="246.5" rx="4.6" ry="7" transform="rotate(-18 58 246.5)" stroke="#ecd4a2" stroke-width="3"/>
<ellipse cx="66.5" cy="251.5" rx="4" ry="6" transform="rotate(-18 66.5 251.5)" stroke="#987b50" stroke-width="3.7"/>
<ellipse cx="66.5" cy="251.5" rx="4" ry="6" transform="rotate(-18 66.5 251.5)" stroke="#dabb8b" stroke-width="2.8"/>
<path d="M85.0 167.0C86.0 169.3 86.3 169.3 88.0 174.0C89.7 178.7 89.3 178.7 90.0 181.0" stroke="#987b50" stroke-width="5.4" stroke-linecap="butt"/>
<path d="M85.0 167.0C86.0 169.3 86.3 169.3 88.0 174.0C89.7 178.7 89.3 178.7 90.0 181.0" stroke="#f6e8b8" stroke-width="4.4" stroke-linecap="butt"/>
<path d="M76.0 185.5C78.7 185.7 79.3 186.3 84.0 186.0C88.7 185.7 88.0 185.0 90.0 184.5" stroke="#987b50" stroke-width="4.6" stroke-linecap="butt"/>
<path d="M76.0 185.5C78.7 185.7 79.3 186.3 84.0 186.0C88.7 185.7 88.0 185.0 90.0 184.5" stroke="#ecd4a2" stroke-width="3.6" stroke-linecap="butt"/>
<path d="M176.0 156.0C180.0 157.5 179.7 157.3 188.0 160.5C196.3 163.7 196.7 163.8 201.0 165.5" stroke="#987b50" stroke-width="6" stroke-linecap="butt"/>
<path d="M176.0 156.0C180.0 157.5 179.7 157.3 188.0 160.5C196.3 163.7 196.7 163.8 201.0 165.5" stroke="#dabb8b" stroke-width="5" stroke-linecap="butt"/>
<path d="M206.4 167.6L199.3 169.9L202.7 161.1z" fill="#dabb8b" stroke="#987b50" stroke-width=".5"/>
<path d="M179.0 170.0C182.0 172.0 182.0 172.2 188.0 176.0C194.0 179.8 194.0 179.7 197.0 181.5" stroke="#987b50" stroke-width="5.8" stroke-linecap="butt"/>
<path d="M179.0 170.0C182.0 172.0 182.0 172.2 188.0 176.0C194.0 179.8 194.0 179.7 197.0 181.5" stroke="#dabb8b" stroke-width="4.8" stroke-linecap="butt"/>
<path d="M201.7 184.4L194.6 185.4L199.4 177.6z" fill="#dabb8b" stroke="#987b50" stroke-width=".5"/>
<path d="M157.0 167.0C158.0 165.8 156.7 164.3 160.0 163.5C163.3 162.7 163.3 162.7 167.0 164.5C170.7 166.3 169.2 165.5 171.0 169.0C172.8 172.5 172.8 171.3 172.5 175.0C172.2 178.7 170.8 178.3 170.0 180.0" stroke="#987b50" stroke-width="5.8" stroke-linecap="butt"/>
<path d="M157.0 167.0C158.0 165.8 156.7 164.3 160.0 163.5C163.3 162.7 163.3 162.7 167.0 164.5C170.7 166.3 169.2 165.5 171.0 169.0C172.8 172.5 172.8 171.3 172.5 175.0C172.2 178.7 170.8 178.3 170.0 180.0" stroke="#ecd4a2" stroke-width="4.8" stroke-linecap="butt"/>
<path d="M160.0 176.0C161.3 174.3 161.0 173.0 164.0 171.0C167.0 169.0 167.3 170.3 169.0 170.0" stroke="#987b50" stroke-width="3.6" stroke-linecap="butt"/>
<path d="M132.0 183.0C132.2 181.0 131.2 180.3 132.5 177.0C133.8 173.7 132.2 175.2 136.0 173.0C139.8 170.8 139.0 171.2 144.0 170.5C149.0 169.8 148.7 170.8 151.0 171.0" stroke="#987b50" stroke-width="5" stroke-linecap="butt"/>
<path d="M132.0 183.0C132.2 181.0 131.2 180.3 132.5 177.0C133.8 173.7 132.2 175.2 136.0 173.0C139.8 170.8 139.0 171.2 144.0 170.5C149.0 169.8 148.7 170.8 151.0 171.0" stroke="#dabb8b" stroke-width="4" stroke-linecap="butt"/>
<path d="M143.0 193.0C144.7 190.3 144.8 189.8 148.0 185.0C151.2 180.2 151.0 180.7 152.5 178.5" stroke="#987b50" stroke-width="4.8" stroke-linecap="butt"/>
<path d="M143.0 193.0C144.7 190.3 144.8 189.8 148.0 185.0C151.2 180.2 151.0 180.7 152.5 178.5" stroke="#ecd4a2" stroke-width="3.8" stroke-linecap="butt"/>
<path d="M155.0 174.9L155.5 180.6L149.5 176.4z" fill="#ecd4a2" stroke="#987b50" stroke-width=".5"/>
<path d="M146.0 203.5C148.3 201.0 147.7 200.3 153.0 196.0C158.3 191.7 156.7 193.0 162.0 190.5C167.3 188.0 166.7 189.2 169.0 188.5" stroke="#987b50" stroke-width="5.8" stroke-linecap="butt"/>
<path d="M146.0 203.5C148.3 201.0 147.7 200.3 153.0 196.0C158.3 191.7 156.7 193.0 162.0 190.5C167.3 188.0 166.7 189.2 169.0 188.5" stroke="#ecd4a2" stroke-width="4.8" stroke-linecap="butt"/>
<path d="M174.3 187.0L170.3 192.9L167.7 184.1z" fill="#ecd4a2" stroke="#987b50" stroke-width=".5"/>
<path d="M140.0 214.5C142.7 212.3 142.0 212.2 148.0 208.0C154.0 203.8 150.7 205.2 158.0 202.0C165.3 198.8 162.3 200.3 170.0 198.5C177.7 196.7 177.3 197.2 181.0 196.5" stroke="#987b50" stroke-width="6.4" stroke-linecap="butt"/>
<path d="M140.0 214.5C142.7 212.3 142.0 212.2 148.0 208.0C154.0 203.8 150.7 205.2 158.0 202.0C165.3 198.8 162.3 200.3 170.0 198.5C177.7 196.7 177.3 197.2 181.0 196.5" stroke="#ecd4a2" stroke-width="5.4" stroke-linecap="butt"/>
<path d="M187.1 195.4L181.9 201.5L180.1 191.5z" fill="#ecd4a2" stroke="#987b50" stroke-width=".5"/>
<path d="M164.0 209.5C166.7 208.8 167.0 208.7 172.0 207.5C177.0 206.3 176.7 206.5 179.0 206.0" stroke="#987b50" stroke-width="6" stroke-linecap="butt"/>
<path d="M164.0 209.5C166.7 208.8 167.0 208.7 172.0 207.5C177.0 206.3 176.7 206.5 179.0 206.0" stroke="#f6e8b8" stroke-width="5" stroke-linecap="butt"/>
<path d="M184.6 204.8L180.0 210.6L178.0 201.4z" fill="#f6e8b8" stroke="#987b50" stroke-width=".5"/>
<path d="M138.0 226.0C142.0 224.8 142.0 224.5 150.0 222.5C158.0 220.5 155.3 221.2 162.0 220.0C168.7 218.8 165.0 219.5 170.0 219.0C175.0 218.5 174.7 218.7 177.0 218.6" stroke="#987b50" stroke-width="6.4" stroke-linecap="butt"/>
<path d="M138.0 226.0C142.0 224.8 142.0 224.5 150.0 222.5C158.0 220.5 155.3 221.2 162.0 220.0C168.7 218.8 165.0 219.5 170.0 219.0C175.0 218.5 174.7 218.7 177.0 218.6" stroke="#ecd4a2" stroke-width="5.4" stroke-linecap="butt"/>
<path d="M183.2 218.2L177.3 223.7L176.7 213.5z" fill="#ecd4a2" stroke="#987b50" stroke-width=".5"/>
<path d="M141.0 231.0C145.7 230.5 146.0 230.3 155.0 229.5C164.0 228.7 160.8 229.1 168.0 228.7C175.2 228.3 173.7 228.5 176.5 228.4" stroke="#987b50" stroke-width="6.6" stroke-linecap="butt"/>
<path d="M141.0 231.0C145.7 230.5 146.0 230.3 155.0 229.5C164.0 228.7 160.8 229.1 168.0 228.7C175.2 228.3 173.7 228.5 176.5 228.4" stroke="#f6e8b8" stroke-width="5.6" stroke-linecap="butt"/>
<path d="M182.9 228.2L176.7 233.7L176.3 223.1z" fill="#f6e8b8" stroke="#987b50" stroke-width=".5"/>
<path d="M139.0 239.5C144.3 239.2 145.3 239.0 155.0 238.5C164.7 238.0 161.3 238.2 168.0 238.0C174.7 237.8 172.7 238.0 175.0 238.0" stroke="#987b50" stroke-width="6.6" stroke-linecap="butt"/>
<path d="M139.0 239.5C144.3 239.2 145.3 239.0 155.0 238.5C164.7 238.0 161.3 238.2 168.0 238.0C174.7 237.8 172.7 238.0 175.0 238.0" stroke="#ecd4a2" stroke-width="5.6" stroke-linecap="butt"/>
<path d="M181.4 238.0L175.0 243.3L175.0 232.7z" fill="#ecd4a2" stroke="#987b50" stroke-width=".5"/>
<path d="M138.0 243.5C142.0 244.7 141.3 244.2 150.0 247.0C158.7 249.8 155.3 248.8 164.0 252.0C172.7 255.2 172.0 255.0 176.0 256.5" stroke="#987b50" stroke-width="6.6" stroke-linecap="butt"/>
<path d="M138.0 243.5C142.0 244.7 141.3 244.2 150.0 247.0C158.7 249.8 155.3 248.8 164.0 252.0C172.7 255.2 172.0 255.0 176.0 256.5" stroke="#ecd4a2" stroke-width="5.6" stroke-linecap="butt"/>
<path d="M182.0 258.8L174.1 261.5L177.9 251.5z" fill="#ecd4a2" stroke="#987b50" stroke-width=".5"/>
<path d="M136.0 255.0C140.0 256.3 140.0 256.2 148.0 259.0C156.0 261.8 152.0 260.5 160.0 263.5C168.0 266.5 168.0 266.5 172.0 268.0" stroke="#987b50" stroke-width="6.6" stroke-linecap="butt"/>
<path d="M136.0 255.0C140.0 256.3 140.0 256.2 148.0 259.0C156.0 261.8 152.0 260.5 160.0 263.5C168.0 266.5 168.0 266.5 172.0 268.0" stroke="#dabb8b" stroke-width="5.6" stroke-linecap="butt"/>
<path d="M178.0 270.3L170.1 273.0L173.9 263.0z" fill="#dabb8b" stroke="#987b50" stroke-width=".5"/>
<path d="M139.0 266.0C142.7 267.3 143.0 267.3 150.0 270.0C157.0 272.7 154.0 271.7 160.0 274.0C166.0 276.3 165.3 276.0 168.0 277.0" stroke="#987b50" stroke-width="6" stroke-linecap="butt"/>
<path d="M139.0 266.0C142.7 267.3 143.0 267.3 150.0 270.0C157.0 272.7 154.0 271.7 160.0 274.0C166.0 276.3 165.3 276.0 168.0 277.0" stroke="#dabb8b" stroke-width="5" stroke-linecap="butt"/>
<path d="M173.4 279.0L166.3 281.4L169.7 272.6z" fill="#dabb8b" stroke="#987b50" stroke-width=".5"/>
<path d="M192.0 266.0C196.7 264.7 196.0 264.8 206.0 262.0C216.0 259.2 211.8 260.3 222.0 257.5C232.2 254.7 231.7 254.8 236.5 253.5" stroke="#987b50" stroke-width="6" stroke-linecap="butt"/>
<path d="M192.0 266.0C196.7 264.7 196.0 264.8 206.0 262.0C216.0 259.2 211.8 260.3 222.0 257.5C232.2 254.7 231.7 254.8 236.5 253.5" stroke="#ecd4a2" stroke-width="5" stroke-linecap="butt"/>
<path d="M194.5 274.5C199.0 272.7 198.8 272.8 208.0 269.0C217.2 265.2 212.5 266.8 222.0 263.0C231.5 259.2 231.7 259.3 236.5 257.5" stroke="#987b50" stroke-width="5.6" stroke-linecap="butt"/>
<path d="M194.5 274.5C199.0 272.7 198.8 272.8 208.0 269.0C217.2 265.2 212.5 266.8 222.0 263.0C231.5 259.2 231.7 259.3 236.5 257.5" stroke="#dabb8b" stroke-width="4.6" stroke-linecap="butt"/>
<path d="M176.0 322.0C177.7 316.3 177.3 314.7 181.0 305.0C184.7 295.3 182.0 299.7 187.0 293.0C192.0 286.3 189.7 289.5 196.0 285.0C202.3 280.5 198.0 284.2 206.0 279.5C214.0 274.8 210.5 276.5 220.0 271.0C229.5 265.5 229.7 265.7 234.5 263.0" stroke="#987b50" stroke-width="5.6" stroke-linecap="butt"/>
<path d="M176.0 322.0C177.7 316.3 177.3 314.7 181.0 305.0C184.7 295.3 182.0 299.7 187.0 293.0C192.0 286.3 189.7 289.5 196.0 285.0C202.3 280.5 198.0 284.2 206.0 279.5C214.0 274.8 210.5 276.5 220.0 271.0C229.5 265.5 229.7 265.7 234.5 263.0" stroke="#ecd4a2" stroke-width="4.6" stroke-linecap="butt"/>
<path d="M186.0 312.0C188.0 309.3 187.3 308.7 192.0 304.0C196.7 299.3 193.3 303.3 200.0 298.0C206.7 292.7 204.7 294.0 212.0 288.0C219.3 282.0 215.3 285.7 222.0 280.0C228.7 274.3 228.7 274.0 232.0 271.0" stroke="#987b50" stroke-width="5.2" stroke-linecap="butt"/>
<path d="M186.0 312.0C188.0 309.3 187.3 308.7 192.0 304.0C196.7 299.3 193.3 303.3 200.0 298.0C206.7 292.7 204.7 294.0 212.0 288.0C219.3 282.0 215.3 285.7 222.0 280.0C228.7 274.3 228.7 274.0 232.0 271.0" stroke="#dabb8b" stroke-width="4.2" stroke-linecap="butt"/>
<path d="M177.0 329.5C179.0 326.7 178.7 326.5 183.0 321.0C187.3 315.5 185.7 317.8 190.0 313.0C194.3 308.2 194.0 308.7 196.0 306.5" stroke="#987b50" stroke-width="6.6" stroke-linecap="butt"/>
<path d="M177.0 329.5C179.0 326.7 178.7 326.5 183.0 321.0C187.3 315.5 185.7 317.8 190.0 313.0C194.3 308.2 194.0 308.7 196.0 306.5" stroke="#f6e8b8" stroke-width="5.6" stroke-linecap="butt"/>
<path d="M188.0 327.5C190.7 325.7 190.7 325.3 196.0 322.0C201.3 318.7 199.8 319.8 204.0 317.5C208.2 315.2 207.0 315.8 208.5 315.0" stroke="#987b50" stroke-width="6.2" stroke-linecap="butt"/>
<path d="M188.0 327.5C190.7 325.7 190.7 325.3 196.0 322.0C201.3 318.7 199.8 319.8 204.0 317.5C208.2 315.2 207.0 315.8 208.5 315.0" stroke="#f6e8b8" stroke-width="5.2" stroke-linecap="butt"/>
<path d="M213.7 312.1L210.9 319.3L206.1 310.7z" fill="#f6e8b8" stroke="#987b50" stroke-width=".5"/>
<ellipse cx="227.5" cy="294.5" rx="3.4" ry="4.6" transform="rotate(-15 227.5 294.5)" stroke="#987b50" stroke-width="3.3"/>
<ellipse cx="227.5" cy="294.5" rx="3.4" ry="4.6" transform="rotate(-15 227.5 294.5)" stroke="#ecd4a2" stroke-width="2.4"/>
<ellipse cx="242" cy="293" rx="3.2" ry="4.4" transform="rotate(-15 242 293)" stroke="#987b50" stroke-width="3.3"/>
<ellipse cx="242" cy="293" rx="3.2" ry="4.4" transform="rotate(-15 242 293)" stroke="#ecd4a2" stroke-width="2.4"/>
<ellipse cx="117" cy="247" rx="10.5" ry="12.5" transform="rotate(-20 117 247)" stroke="#987b50" stroke-width="3.5"/>
<ellipse cx="117" cy="247" rx="10.5" ry="12.5" transform="rotate(-20 117 247)" stroke="#b89e70" stroke-width="2.6"/>
<ellipse cx="118" cy="243" rx="6.5" ry="4.5" transform="rotate(-10 118 243)" stroke="#987b50" stroke-width="3.3"/>
<ellipse cx="118" cy="243" rx="6.5" ry="4.5" transform="rotate(-10 118 243)" stroke="#987b50" stroke-width="2.4"/>
<ellipse cx="210.5" cy="198" rx="6.4" ry="6" transform="rotate(0 210.5 198)" stroke="#987b50" stroke-width="3.3"/>
<ellipse cx="210.5" cy="198" rx="6.4" ry="6" transform="rotate(0 210.5 198)" stroke="#c9ab7c" stroke-width="2.4"/>
<ellipse cx="222" cy="215.5" rx="5.2" ry="4.4" transform="rotate(0 222 215.5)" stroke="#987b50" stroke-width="3.1"/>
<ellipse cx="222" cy="215.5" rx="5.2" ry="4.4" transform="rotate(0 222 215.5)" stroke="#c9ab7c" stroke-width="2.2"/>
<path d="M208.0 206.7L215.7 208.0" stroke="#987b50" stroke-width="4.8" stroke-linecap="butt"/>
<path d="M208.0 206.7L215.7 208.0" stroke="#f6e8b8" stroke-width="3.8" stroke-linecap="butt"/>
<path d="M189.0 207.0C190.3 209.0 190.0 208.0 193.0 213.0C196.0 218.0 196.3 216.3 198.0 222.0C199.7 227.7 198.5 225.0 198.0 230.0C197.5 235.0 197.0 234.7 196.5 237.0" stroke="#987b50" stroke-width="5.6" stroke-linecap="butt"/>
<path d="M189.0 207.0C190.3 209.0 190.0 208.0 193.0 213.0C196.0 218.0 196.3 216.3 198.0 222.0C199.7 227.7 198.5 225.0 198.0 230.0C197.5 235.0 197.0 234.7 196.5 237.0" stroke="#dabb8b" stroke-width="4.6" stroke-linecap="butt"/>
<path d="M186.0 209.0C187.3 213.3 187.3 213.0 190.0 222.0C192.7 231.0 192.0 228.0 194.0 236.0C196.0 244.0 195.3 242.7 196.0 246.0" stroke="#987b50" stroke-width="2.6" stroke-linecap="butt"/>
<path d="M164.0 204.5C160.7 206.0 160.3 205.5 154.0 209.0C147.7 212.5 148.0 213.0 145.0 215.0" stroke="#987b50" stroke-width="5.4" stroke-linecap="butt"/>
<path d="M164.0 204.5C160.7 206.0 160.3 205.5 154.0 209.0C147.7 212.5 148.0 213.0 145.0 215.0" stroke="#f6e8b8" stroke-width="4.4" stroke-linecap="butt"/>
<path d="M140.8 217.8L142.7 211.5L147.3 218.5z" fill="#f6e8b8" stroke="#987b50" stroke-width=".5"/>
<path d="M178.0 186.0C175.3 187.3 176.0 186.7 170.0 190.0C164.0 193.3 163.3 194.0 160.0 196.0" stroke="#987b50" stroke-width="4.6" stroke-linecap="butt"/>
<path d="M178.0 186.0C175.3 187.3 176.0 186.7 170.0 190.0C164.0 193.3 163.3 194.0 160.0 196.0" stroke="#dabb8b" stroke-width="3.6" stroke-linecap="butt"/>
<path d="M200.0 252.0C201.3 255.3 202.0 256.0 204.0 262.0C206.0 268.0 205.3 267.3 206.0 270.0" stroke="#dabb8b" stroke-width="3" stroke-linecap="butt"/>
<path d="M193.5 250.6C196.0 250.1 196.0 249.9 201.0 249.0C206.0 248.1 206.0 248.3 208.5 248.0" stroke="#987b50" stroke-width="4.4" stroke-linecap="butt"/>
<path d="M193.5 250.6C196.0 250.1 196.0 249.9 201.0 249.0C206.0 248.1 206.0 248.3 208.5 248.0" stroke="#dabb8b" stroke-width="3.4" stroke-linecap="butt"/>
<path d="M211.0 235.5C210.7 240.0 210.8 239.8 210.0 249.0C209.2 258.2 209.0 258.3 208.5 263.0" stroke="#dabb8b" stroke-width="2.4" stroke-linecap="butt"/>
<path d="M80.3 144.1L81.6 145.0L81.6 146.6L80.3 145.8z" fill="#bfa476" stroke="#bfa476" stroke-width=".5"/>
<path d="M81.6 145.0L81.8 145.8L81.8 147.6L81.6 146.6z" fill="#b09568" stroke="#b09568" stroke-width=".5"/>
<path d="M66.1 151.0L67.2 152.2L67.2 157.7L66.2 157.1z" fill="#ba9f72" stroke="#ba9f72" stroke-width=".5"/>
<path d="M67.2 152.2L69.3 153.5L69.4 158.2L67.2 157.7z" fill="#d4bb8b" stroke="#d4bb8b" stroke-width=".5"/>
<path d="M69.3 153.5L72.2 154.8L72.2 158.5L69.4 158.2z" fill="#e7cf9d" stroke="#e7cf9d" stroke-width=".5"/>
<path d="M72.2 154.8L75.4 156.1L75.4 159.0L72.2 158.5z" fill="#ebd3a1" stroke="#ebd3a1" stroke-width=".5"/>
<path d="M75.4 156.1L78.4 157.3L78.4 159.4L75.4 159.0z" fill="#e9d19f" stroke="#e9d19f" stroke-width=".5"/>
<path d="M78.4 157.3L80.8 158.4L80.8 160.1L78.4 159.4z" fill="#d9c08f" stroke="#d9c08f" stroke-width=".5"/>
<path d="M80.8 158.4L82.2 159.4L82.2 160.9L80.8 160.1z" fill="#bfa476" stroke="#bfa476" stroke-width=".5"/>
<path d="M82.2 159.4L82.3 160.1L82.4 162.0L82.2 160.9z" fill="#b09568" stroke="#b09568" stroke-width=".5"/>
<path d="M65.8 165.3L67.0 166.5L67.0 172.0L65.9 171.5z" fill="#ba9f72" stroke="#ba9f72" stroke-width=".5"/>
<path d="M67.0 166.5L69.2 167.8L69.3 172.5L67.0 172.0z" fill="#d4bb8b" stroke="#d4bb8b" stroke-width=".5"/>
<path d="M69.2 167.8L72.3 169.1L72.3 172.9L69.3 172.5z" fill="#e7cf9d" stroke="#e7cf9d" stroke-width=".5"/>
<path d="M72.3 169.1L75.6 170.5L75.7 173.3L72.3 172.9z" fill="#ebd3a1" stroke="#ebd3a1" stroke-width=".5"/>
<path d="M75.6 170.5L78.8 171.7L78.8 173.8L75.7 173.3z" fill="#e9d19f" stroke="#e9d19f" stroke-width=".5"/>
<path d="M78.8 171.7L81.3 172.8L81.3 174.4L78.8 173.8z" fill="#d9c08f" stroke="#d9c08f" stroke-width=".5"/>
<path d="M81.3 172.8L82.8 173.7L82.8 175.3L81.3 174.4z" fill="#bfa476" stroke="#bfa476" stroke-width=".5"/>
<path d="M82.8 173.7L82.9 174.5L82.9 176.3L82.8 175.3z" fill="#b09568" stroke="#b09568" stroke-width=".5"/>
<path d="M65.6 179.7L66.8 180.9L66.8 186.4L65.6 185.8z" fill="#ba9f72" stroke="#ba9f72" stroke-width=".5"/>
<path d="M66.8 180.9L69.1 182.1L69.2 186.8L66.8 186.4z" fill="#d4bb8b" stroke="#d4bb8b" stroke-width=".5"/>
<path d="M69.1 182.1L72.3 183.5L72.3 187.2L69.2 186.8z" fill="#e7cf9d" stroke="#e7cf9d" stroke-width=".5"/>
<path d="M72.3 183.5L75.8 184.8L75.9 187.6L72.3 187.2z" fill="#ebd3a1" stroke="#ebd3a1" stroke-width=".5"/>
<path d="M75.8 184.8L79.2 186.0L79.2 188.1L75.9 187.6z" fill="#e9d19f" stroke="#e9d19f" stroke-width=".5"/>
<path d="M79.2 186.0L81.8 187.2L81.8 188.8L79.2 188.1z" fill="#d9c08f" stroke="#d9c08f" stroke-width=".5"/>
<path d="M81.8 187.2L83.3 188.1L83.3 189.6L81.8 188.8z" fill="#bfa476" stroke="#bfa476" stroke-width=".5"/>
<path d="M83.3 188.1L83.5 188.9L83.5 190.7L83.3 189.6z" fill="#b09568" stroke="#b09568" stroke-width=".5"/>
<path d="M65.3 194.0L66.5 195.1L66.5 200.7L65.3 200.1z" fill="#ba9f72" stroke="#ba9f72" stroke-width=".5"/>
<path d="M66.5 195.1L69.0 196.5L69.0 201.1L66.5 200.7z" fill="#d4bb8b" stroke="#d4bb8b" stroke-width=".5"/>
<path d="M69.0 196.5L72.3 197.8L72.3 201.6L69.0 201.1z" fill="#e7cf9d" stroke="#e7cf9d" stroke-width=".5"/>
<path d="M72.3 197.8L76.0 199.2L76.0 202.0L72.3 201.6z" fill="#ebd3a1" stroke="#ebd3a1" stroke-width=".5"/>
<path d="M76.0 199.2L79.5 200.5L79.4 202.5L76.0 202.0z" fill="#e9d19f" stroke="#e9d19f" stroke-width=".5"/>
<path d="M79.5 200.5L82.2 201.6L82.2 203.3L79.4 202.5z" fill="#d9c08f" stroke="#d9c08f" stroke-width=".5"/>
<path d="M82.2 201.6L83.8 202.6L83.7 204.1L82.2 203.3z" fill="#bfa476" stroke="#bfa476" stroke-width=".5"/>
<path d="M83.8 202.6L83.9 203.4L83.9 205.2L83.7 204.1z" fill="#b09568" stroke="#b09568" stroke-width=".5"/>
<path d="M64.8 208.0L66.0 209.2L65.9 214.7L64.6 214.1z" fill="#ba9f72" stroke="#ba9f72" stroke-width=".5"/>
<path d="M66.0 209.2L68.6 210.6L68.4 215.3L65.9 214.7z" fill="#d4bb8b" stroke="#d4bb8b" stroke-width=".5"/>
<path d="M68.6 210.6L72.0 212.1L71.9 215.8L68.4 215.3z" fill="#e7cf9d" stroke="#e7cf9d" stroke-width=".5"/>
<path d="M72.0 212.1L75.8 213.6L75.7 216.4L71.9 215.8z" fill="#ebd3a1" stroke="#ebd3a1" stroke-width=".5"/>
<path d="M75.8 213.6L79.4 214.9L79.3 217.0L75.7 216.4z" fill="#e9d19f" stroke="#e9d19f" stroke-width=".5"/>
<path d="M79.4 214.9L82.2 216.2L82.2 217.8L79.3 217.0z" fill="#d9c08f" stroke="#d9c08f" stroke-width=".5"/>
<path d="M82.2 216.2L83.8 217.2L83.8 218.7L82.2 217.8z" fill="#bfa476" stroke="#bfa476" stroke-width=".5"/>
<path d="M83.8 217.2L84.0 217.9L83.9 219.7L83.8 218.7z" fill="#b09568" stroke="#b09568" stroke-width=".5"/>
<path d="M63.9 222.4L65.2 223.6L65.1 229.2L63.7 228.5z" fill="#ba9f72" stroke="#ba9f72" stroke-width=".5"/>
<path d="M65.2 223.6L67.9 225.0L67.8 229.7L65.1 229.2z" fill="#d4bb8b" stroke="#d4bb8b" stroke-width=".5"/>
<path d="M67.9 225.0L71.5 226.5L71.4 230.2L67.8 229.7z" fill="#e7cf9d" stroke="#e7cf9d" stroke-width=".5"/>
<path d="M71.5 226.5L75.4 227.9L75.4 230.7L71.4 230.2z" fill="#ebd3a1" stroke="#ebd3a1" stroke-width=".5"/>
<path d="M75.4 227.9L79.2 229.1L79.2 231.2L75.4 230.7z" fill="#e9d19f" stroke="#e9d19f" stroke-width=".5"/>
<path d="M79.2 229.1L82.2 230.2L82.2 231.8L79.2 231.2z" fill="#d9c08f" stroke="#d9c08f" stroke-width=".5"/>
<path d="M82.2 230.2L83.9 231.0L84.0 232.6L82.2 231.8z" fill="#bfa476" stroke="#bfa476" stroke-width=".5"/>
<path d="M83.9 231.0L84.1 231.7L84.2 233.5L84.0 232.6z" fill="#b09568" stroke="#b09568" stroke-width=".5"/>
<path d="M63.6 238.6L65.2 239.8L66.2 245.2L64.6 244.7z" fill="#ba9f72" stroke="#ba9f72" stroke-width=".5"/>
<path d="M65.2 239.8L68.2 240.7L69.1 245.3L66.2 245.2z" fill="#d4bb8b" stroke="#d4bb8b" stroke-width=".5"/>
<path d="M68.2 240.7L72.1 241.4L72.9 245.0L69.1 245.3z" fill="#e7cf9d" stroke="#e7cf9d" stroke-width=".5"/>
<path d="M72.1 241.4L76.5 241.7L77.1 244.5L72.9 245.0z" fill="#ebd3a1" stroke="#ebd3a1" stroke-width=".5"/>
<path d="M76.5 241.7L80.5 241.9L81.1 243.9L77.1 244.5z" fill="#e9d19f" stroke="#e9d19f" stroke-width=".5"/>
<path d="M80.5 241.9L83.8 241.9L84.2 243.5L81.1 243.9z" fill="#d9c08f" stroke="#d9c08f" stroke-width=".5"/>
<path d="M83.8 241.9L85.7 242.1L86.2 243.6L84.2 243.5z" fill="#bfa476" stroke="#bfa476" stroke-width=".5"/>
<path d="M85.7 242.1L86.0 242.6L86.6 244.3L86.2 243.6z" fill="#b09568" stroke="#b09568" stroke-width=".5"/>
<path d="M114.7 145.8L116.7 147.8L115.8 152.5L113.9 150.5z" fill="#d4bb8b" stroke="#d4bb8b" stroke-width=".5"/>
<path d="M116.7 147.8L117.5 149.9L116.6 154.7L115.8 152.5z" fill="#ba9f72" stroke="#ba9f72" stroke-width=".5"/>
<path d="M99.8 153.7L100.0 153.1L99.2 157.9L99.0 158.4z" fill="#b09568" stroke="#b09568" stroke-width=".5"/>
<path d="M100.0 153.1L101.5 152.9L100.6 157.6L99.2 157.9z" fill="#bfa476" stroke="#bfa476" stroke-width=".5"/>
<path d="M101.5 152.9L103.9 153.1L103.1 157.8L100.6 157.6z" fill="#d9c08f" stroke="#d9c08f" stroke-width=".5"/>
<path d="M103.9 153.1L107.0 153.9L106.1 158.6L103.1 157.8z" fill="#e9d19f" stroke="#e9d19f" stroke-width=".5"/>
<path d="M107.0 153.9L110.1 155.2L109.3 159.9L106.1 158.6z" fill="#ebd3a1" stroke="#ebd3a1" stroke-width=".5"/>
<path d="M110.1 155.2L112.9 157.0L112.1 161.7L109.3 159.9z" fill="#e7cf9d" stroke="#e7cf9d" stroke-width=".5"/>
<path d="M112.9 157.0L114.9 159.0L114.1 163.8L112.1 161.7z" fill="#d4bb8b" stroke="#d4bb8b" stroke-width=".5"/>
<path d="M114.9 159.0L115.7 161.2L114.9 165.9L114.1 163.8z" fill="#ba9f72" stroke="#ba9f72" stroke-width=".5"/>
<path d="M97.6 165.0L97.8 164.4L97.1 169.1L96.8 169.7z" fill="#b09568" stroke="#b09568" stroke-width=".5"/>
<path d="M97.8 164.4L99.3 164.1L98.5 168.8L97.1 169.1z" fill="#bfa476" stroke="#bfa476" stroke-width=".5"/>
<path d="M99.3 164.1L101.8 164.3L101.1 169.0L98.5 168.8z" fill="#d9c08f" stroke="#d9c08f" stroke-width=".5"/>
<path d="M101.8 164.3L105.0 165.0L104.2 169.8L101.1 169.0z" fill="#e9d19f" stroke="#e9d19f" stroke-width=".5"/>
<path d="M105.0 165.0L108.2 166.3L107.5 171.1L104.2 169.8z" fill="#ebd3a1" stroke="#ebd3a1" stroke-width=".5"/>
<path d="M108.2 166.3L111.1 168.1L110.4 172.8L107.5 171.1z" fill="#e7cf9d" stroke="#e7cf9d" stroke-width=".5"/>
<path d="M111.1 168.1L113.2 170.1L112.5 174.9L110.4 172.8z" fill="#d4bb8b" stroke="#d4bb8b" stroke-width=".5"/>
<path d="M113.2 170.1L114.1 172.3L113.3 177.0L112.5 174.9z" fill="#ba9f72" stroke="#ba9f72" stroke-width=".5"/>
<path d="M95.6 176.6L95.8 176.0L95.2 180.7L95.0 181.4z" fill="#b09568" stroke="#b09568" stroke-width=".5"/>
<path d="M95.8 176.0L97.3 175.6L96.7 180.4L95.2 180.7z" fill="#bfa476" stroke="#bfa476" stroke-width=".5"/>
<path d="M97.3 175.6L99.8 175.7L99.3 180.4L96.7 180.4z" fill="#d9c08f" stroke="#d9c08f" stroke-width=".5"/>
<path d="M99.8 175.7L103.1 176.2L102.6 181.0L99.3 180.4z" fill="#e9d19f" stroke="#e9d19f" stroke-width=".5"/>
<path d="M103.1 176.2L106.5 177.4L106.0 182.2L102.6 181.0z" fill="#ebd3a1" stroke="#ebd3a1" stroke-width=".5"/>
<path d="M106.5 177.4L109.6 179.0L109.1 183.8L106.0 182.2z" fill="#e7cf9d" stroke="#e7cf9d" stroke-width=".5"/>
<path d="M109.6 179.0L111.8 181.0L111.3 185.8L109.1 183.8z" fill="#d4bb8b" stroke="#d4bb8b" stroke-width=".5"/>
<path d="M111.8 181.0L112.8 183.1L112.3 187.9L111.3 185.8z" fill="#ba9f72" stroke="#ba9f72" stroke-width=".5"/>
<path d="M94.1 188.2L94.3 187.5L93.8 192.2L93.7 192.9z" fill="#b09568" stroke="#b09568" stroke-width=".5"/>
<path d="M94.3 187.5L95.9 187.0L95.4 191.8L93.8 192.2z" fill="#bfa476" stroke="#bfa476" stroke-width=".5"/>
<path d="M95.9 187.0L98.5 187.0L98.1 191.8L95.4 191.8z" fill="#d9c08f" stroke="#d9c08f" stroke-width=".5"/>
<path d="M98.5 187.0L101.9 187.5L101.4 192.3L98.1 191.8z" fill="#e9d19f" stroke="#e9d19f" stroke-width=".5"/>
<path d="M101.9 187.5L105.4 188.6L104.9 193.4L101.4 192.3z" fill="#ebd3a1" stroke="#ebd3a1" stroke-width=".5"/>
<path d="M105.4 188.6L108.6 190.3L108.1 195.0L104.9 193.4z" fill="#e7cf9d" stroke="#e7cf9d" stroke-width=".5"/>
<path d="M108.6 190.3L110.9 192.3L110.4 197.1L108.1 195.0z" fill="#d4bb8b" stroke="#d4bb8b" stroke-width=".5"/>
<path d="M110.9 192.3L111.9 194.5L111.4 199.3L110.4 197.1z" fill="#ba9f72" stroke="#ba9f72" stroke-width=".5"/>
<path d="M92.8 199.1L93.0 198.3L92.4 203.1L92.1 203.9z" fill="#b09568" stroke="#b09568" stroke-width=".5"/>
<path d="M93.0 198.3L94.7 197.9L94.0 202.6L92.4 203.1z" fill="#bfa476" stroke="#bfa476" stroke-width=".5"/>
<path d="M94.7 197.9L97.4 198.0L96.7 202.7L94.0 202.6z" fill="#d9c08f" stroke="#d9c08f" stroke-width=".5"/>
<path d="M97.4 198.0L100.9 198.7L100.1 203.4L96.7 202.7z" fill="#e9d19f" stroke="#e9d19f" stroke-width=".5"/>
<path d="M100.9 198.7L104.4 200.0L103.6 204.8L100.1 203.4z" fill="#ebd3a1" stroke="#ebd3a1" stroke-width=".5"/>
<path d="M104.4 200.0L107.6 202.0L106.7 206.7L103.6 204.8z" fill="#e7cf9d" stroke="#e7cf9d" stroke-width=".5"/>
<path d="M107.6 202.0L109.8 204.2L108.9 208.9L106.7 206.7z" fill="#d4bb8b" stroke="#d4bb8b" stroke-width=".5"/>
<path d="M109.8 204.2L110.7 206.6L109.8 211.3L108.9 208.9z" fill="#ba9f72" stroke="#ba9f72" stroke-width=".5"/>
<path d="M90.8 209.6L91.1 208.8L90.1 213.5L89.8 214.3z" fill="#b09568" stroke="#b09568" stroke-width=".5"/>
<path d="M91.1 208.8L92.8 208.5L91.7 213.2L90.1 213.5z" fill="#bfa476" stroke="#bfa476" stroke-width=".5"/>
<path d="M92.8 208.5L95.6 208.8L94.5 213.5L91.7 213.2z" fill="#d9c08f" stroke="#d9c08f" stroke-width=".5"/>
<path d="M95.6 208.8L99.0 209.7L97.9 214.4L94.5 213.5z" fill="#e9d19f" stroke="#e9d19f" stroke-width=".5"/>
<path d="M99.0 209.7L102.5 211.3L101.5 216.0L97.9 214.4z" fill="#ebd3a1" stroke="#ebd3a1" stroke-width=".5"/>
<path d="M102.5 211.3L105.6 213.4L104.6 218.1L101.5 216.0z" fill="#e7cf9d" stroke="#e7cf9d" stroke-width=".5"/>
<path d="M105.6 213.4L107.7 215.7L106.7 220.4L104.6 218.1z" fill="#d4bb8b" stroke="#d4bb8b" stroke-width=".5"/>
<path d="M107.7 215.7L108.6 218.1L107.5 222.8L106.7 220.4z" fill="#ba9f72" stroke="#ba9f72" stroke-width=".5"/>
<path d="M88.0 220.9L88.3 220.1L87.4 224.9L87.1 225.6z" fill="#b09568" stroke="#b09568" stroke-width=".5"/>
<path d="M88.3 220.1L90.0 219.8L89.1 224.5L87.4 224.9z" fill="#bfa476" stroke="#bfa476" stroke-width=".5"/>
<path d="M90.0 219.8L92.8 220.0L92.0 224.7L89.1 224.5z" fill="#d9c08f" stroke="#d9c08f" stroke-width=".5"/>
<path d="M92.8 220.0L96.3 220.8L95.5 225.5L92.0 224.7z" fill="#e9d19f" stroke="#e9d19f" stroke-width=".5"/>
<path d="M96.3 220.8L100.0 222.2L99.2 226.9L95.5 225.5z" fill="#ebd3a1" stroke="#ebd3a1" stroke-width=".5"/>
<path d="M100.0 222.2L103.2 224.1L102.5 228.8L99.2 226.9z" fill="#e7cf9d" stroke="#e7cf9d" stroke-width=".5"/>
<path d="M103.2 224.1L105.5 226.3L104.8 231.0L102.5 228.8z" fill="#d4bb8b" stroke="#d4bb8b" stroke-width=".5"/>
<path d="M105.5 226.3L106.5 228.6L105.8 233.4L104.8 231.0z" fill="#ba9f72" stroke="#ba9f72" stroke-width=".5"/>
<path d="M85.9 232.8L86.1 231.9L85.5 236.7L85.2 237.5z" fill="#b09568" stroke="#b09568" stroke-width=".5"/>
<path d="M86.1 231.9L87.8 231.4L87.2 236.2L85.5 236.7z" fill="#bfa476" stroke="#bfa476" stroke-width=".5"/>
<path d="M87.8 231.4L90.7 231.4L90.1 236.2L87.2 236.2z" fill="#d9c08f" stroke="#d9c08f" stroke-width=".5"/>
<path d="M90.7 231.4L94.4 232.0L93.8 236.8L90.1 236.2z" fill="#e9d19f" stroke="#e9d19f" stroke-width=".5"/>
<path d="M94.4 232.0L98.3 233.3L97.7 238.1L93.8 236.8z" fill="#ebd3a1" stroke="#ebd3a1" stroke-width=".5"/>
<path d="M98.3 233.3L101.7 235.2L101.1 239.9L97.7 238.1z" fill="#e7cf9d" stroke="#e7cf9d" stroke-width=".5"/>
<path d="M88.0 244.1L91.0 244.1L92.1 248.1L89.1 248.2z" fill="#ebd3a1" stroke="#ebd3a1" stroke-width=".5"/>
<path d="M91.0 244.1L93.5 243.8L94.6 247.8L92.1 248.1z" fill="#e1c897" stroke="#e1c897" stroke-width=".5"/>
<path d="M93.5 243.8L95.1 243.5L96.2 247.6L94.6 247.8z" fill="#c9af7f" stroke="#c9af7f" stroke-width=".5"/>
<path d="M95.1 243.5L95.6 243.4L96.7 247.4L96.2 247.6z" fill="#b3986a" stroke="#b3986a" stroke-width=".5"/>
<path d="M82.9 254.1L84.1 255.5L85.2 259.6L84.0 258.1z" fill="#b59a6d" stroke="#b59a6d" stroke-width=".5"/>
<path d="M84.1 255.5L86.2 256.6L87.3 260.7L85.2 259.6z" fill="#cdb384" stroke="#cdb384" stroke-width=".5"/>
<path d="M86.2 256.6L89.0 257.2L90.2 261.2L87.3 260.7z" fill="#e4cb9a" stroke="#e4cb9a" stroke-width=".5"/>
<path d="M89.0 257.2L92.1 257.3L93.3 261.4L90.2 261.2z" fill="#ebd3a1" stroke="#ebd3a1" stroke-width=".5"/>
<path d="M92.1 257.3L95.0 257.1L96.2 261.2L93.3 261.4z" fill="#ead2a0" stroke="#ead2a0" stroke-width=".5"/>
<path d="M95.0 257.1L97.3 256.8L98.5 260.8L96.2 261.2z" fill="#dec594" stroke="#dec594" stroke-width=".5"/>
<path d="M97.3 256.8L98.7 256.4L100.0 260.4L98.5 260.8z" fill="#c4aa7b" stroke="#c4aa7b" stroke-width=".5"/>
<path d="M98.7 256.4L99.0 256.3L100.3 260.3L100.0 260.4z" fill="#b19669" stroke="#b19669" stroke-width=".5"/>
<path d="M87.1 268.0L88.6 269.3L90.0 273.2L88.5 271.9z" fill="#b89d70" stroke="#b89d70" stroke-width=".5"/>
<path d="M88.6 269.3L90.9 270.1L92.4 274.0L90.0 273.2z" fill="#d2b888" stroke="#d2b888" stroke-width=".5"/>
<path d="M90.9 270.1L93.8 270.4L95.3 274.3L92.4 274.0z" fill="#e6ce9c" stroke="#e6ce9c" stroke-width=".5"/>
<path d="M93.8 270.4L96.9 270.2L98.4 274.1L95.3 274.3z" fill="#ebd3a1" stroke="#ebd3a1" stroke-width=".5"/>
<path d="M96.9 270.2L99.7 269.7L101.2 273.7L98.4 274.1z" fill="#e9d1a0" stroke="#e9d1a0" stroke-width=".5"/>
<path d="M99.7 269.7L101.9 269.2L103.4 273.1L101.2 273.7z" fill="#dac190" stroke="#dac190" stroke-width=".5"/>
<path d="M101.9 269.2L103.1 268.8L104.6 272.7L103.4 273.1z" fill="#c0a577" stroke="#c0a577" stroke-width=".5"/>
<path d="M103.1 268.8L103.2 268.6L104.8 272.6L104.6 272.7z" fill="#b09568" stroke="#b09568" stroke-width=".5"/>
<path d="M92.5 281.6L94.2 282.7L96.0 286.5L94.3 285.4z" fill="#bca173" stroke="#bca173" stroke-width=".5"/>
<path d="M94.2 282.7L96.8 283.2L98.6 287.0L96.0 286.5z" fill="#d6bd8d" stroke="#d6bd8d" stroke-width=".5"/>
<path d="M96.8 283.2L99.7 283.1L101.6 286.9L98.6 287.0z" fill="#e8d09e" stroke="#e8d09e" stroke-width=".5"/>
<path d="M99.7 283.1L102.8 282.5L104.7 286.3L101.6 286.9z" fill="#ecd4a2" stroke="#ecd4a2" stroke-width=".5"/>
<path d="M102.8 282.5L105.4 281.8L107.3 285.5L104.7 286.3z" fill="#e8d09e" stroke="#e8d09e" stroke-width=".5"/>
<path d="M105.4 281.8L107.4 281.0L109.3 284.7L107.3 285.5z" fill="#d6bd8d" stroke="#d6bd8d" stroke-width=".5"/>
<path d="M107.4 281.0L108.3 280.5L110.3 284.2L109.3 284.7z" fill="#bca173" stroke="#bca173" stroke-width=".5"/>
<path d="M35.8 279.8L38.0 278.9L42.9 278.0L40.7 278.9z" fill="#b4986b" stroke="#b4986b" stroke-width=".5"/>
<path d="M38.0 278.9L39.8 277.0L44.7 276.1L42.9 278.0z" fill="#cab081" stroke="#cab081" stroke-width=".5"/>
<path d="M39.8 277.0L41.0 274.4L46.0 273.6L44.7 276.1z" fill="#e2c998" stroke="#e2c998" stroke-width=".5"/>
<path d="M41.0 274.4L41.7 271.6L46.6 270.7L46.0 273.6z" fill="#ebd3a1" stroke="#ebd3a1" stroke-width=".5"/>
<path d="M41.7 271.6L41.8 268.8L46.7 268.0L46.6 270.7z" fill="#ebd3a1" stroke="#ebd3a1" stroke-width=".5"/>
<path d="M41.8 268.8L41.4 266.6L46.3 265.8L46.7 268.0z" fill="#e0c897" stroke="#e0c897" stroke-width=".5"/>
<path d="M41.4 266.6L40.7 265.2L45.6 264.4L46.3 265.8z" fill="#c8ae7f" stroke="#c8ae7f" stroke-width=".5"/>
<path d="M40.7 265.2L40.0 264.9L44.9 264.0L45.6 264.4z" fill="#b3976a" stroke="#b3976a" stroke-width=".5"/>
<path d="M50.0 277.2L52.2 276.0L57.0 274.7L54.8 276.0z" fill="#b69a6d" stroke="#b69a6d" stroke-width=".5"/>
<path d="M52.2 276.0L53.8 273.8L58.6 272.4L57.0 274.7z" fill="#cdb484" stroke="#cdb484" stroke-width=".5"/>
<path d="M53.8 273.8L54.7 271.0L59.5 269.6L58.6 272.4z" fill="#e4cc9a" stroke="#e4cc9a" stroke-width=".5"/>
<path d="M54.7 271.0L55.0 268.1L59.7 266.7L59.5 269.6z" fill="#ebd3a1" stroke="#ebd3a1" stroke-width=".5"/>
<path d="M55.0 268.1L54.6 265.4L59.4 264.0L59.7 266.7z" fill="#ead2a0" stroke="#ead2a0" stroke-width=".5"/>
<path d="M54.6 265.4L53.9 263.4L58.7 261.9L59.4 264.0z" fill="#dec594" stroke="#dec594" stroke-width=".5"/>
<path d="M53.9 263.4L53.0 262.3L57.8 260.8L58.7 261.9z" fill="#c4aa7b" stroke="#c4aa7b" stroke-width=".5"/>
<path d="M53.0 262.3L52.3 262.2L57.0 260.6L57.8 260.8z" fill="#b19669" stroke="#b19669" stroke-width=".5"/>
<path d="M64.7 272.6L66.6 270.8L71.0 268.4L69.2 270.4z" fill="#b89d6f" stroke="#b89d6f" stroke-width=".5"/>
<path d="M66.6 270.8L67.7 268.1L72.0 265.5L71.0 268.4z" fill="#d1b888" stroke="#d1b888" stroke-width=".5"/>
<path d="M67.7 268.1L67.8 265.0L71.9 262.1L72.0 265.5z" fill="#e6ce9c" stroke="#e6ce9c" stroke-width=".5"/>
<path d="M67.8 265.0L66.8 262.2L70.6 258.8L71.9 262.1z" fill="#ebd3a1" stroke="#ebd3a1" stroke-width=".5"/>
<path d="M66.8 262.2L65.0 260.1L68.3 256.4L70.6 258.8z" fill="#ead2a0" stroke="#ead2a0" stroke-width=".5"/>
<path d="M65.0 260.1L62.9 259.3L65.8 255.2L68.3 256.4z" fill="#dbc291" stroke="#dbc291" stroke-width=".5"/>
<path d="M62.9 259.3L61.4 259.6L63.8 255.3L65.8 255.2z" fill="#c1a678" stroke="#c1a678" stroke-width=".5"/>
<path d="M61.4 259.6L60.8 260.7L62.9 256.2L63.8 255.3z" fill="#b09568" stroke="#b09568" stroke-width=".5"/>
<path d="M57.3 306.7L57.1 305.9L58.5 301.2L58.7 301.9z" fill="#b49c6f" stroke="#b49c6f" stroke-width=".5"/>
<path d="M57.1 305.9L56.2 305.0L57.8 300.3L58.5 301.2z" fill="#c5b082" stroke="#c5b082" stroke-width=".5"/>
<path d="M56.2 305.0L54.8 303.9L56.5 299.2L57.8 300.3z" fill="#ddcc9d" stroke="#ddcc9d" stroke-width=".5"/>
<path d="M54.8 303.9L53.0 302.6L54.8 297.9L56.5 299.2z" fill="#efe0b0" stroke="#efe0b0" stroke-width=".5"/>
<path d="M53.0 302.6L51.1 301.0L53.1 296.4L54.8 297.9z" fill="#f5e7b7" stroke="#f5e7b7" stroke-width=".5"/>
<path d="M51.1 301.0L49.2 299.2L51.5 294.8L53.1 296.4z" fill="#f5e7b7" stroke="#f5e7b7" stroke-width=".5"/>
<path d="M49.2 299.2L47.8 297.2L50.4 293.0L51.5 294.8z" fill="#efe0b0" stroke="#efe0b0" stroke-width=".5"/>
<path d="M47.8 297.2L46.9 295.0L50.1 291.1L50.4 293.0z" fill="#ddcc9d" stroke="#ddcc9d" stroke-width=".5"/>
<path d="M46.9 295.0L47.1 292.7L50.8 289.4L50.1 291.1z" fill="#c5b082" stroke="#c5b082" stroke-width=".5"/>
<path d="M47.1 292.7L48.2 290.9L52.4 288.2L50.8 289.4z" fill="#b49c6f" stroke="#b49c6f" stroke-width=".5"/>
<path d="M58.7 302.2L59.5 301.9L64.5 302.1L63.7 302.4z" fill="#b49c6f" stroke="#b49c6f" stroke-width=".5"/>
<path d="M59.5 301.9L60.3 300.9L65.3 301.0L64.5 302.1z" fill="#c5b082" stroke="#c5b082" stroke-width=".5"/>
<path d="M60.3 300.9L61.1 299.3L66.1 299.4L65.3 301.0z" fill="#ddcc9d" stroke="#ddcc9d" stroke-width=".5"/>
<path d="M61.1 299.3L61.9 297.3L66.9 297.3L66.1 299.4z" fill="#efe0b0" stroke="#efe0b0" stroke-width=".5"/>
<path d="M61.9 297.3L62.6 295.0L67.6 295.1L66.9 297.3z" fill="#f5e7b7" stroke="#f5e7b7" stroke-width=".5"/>
<path d="M62.6 295.0L63.4 292.7L68.4 292.8L67.6 295.1z" fill="#f5e7b7" stroke="#f5e7b7" stroke-width=".5"/>
<path d="M63.4 292.7L64.3 290.6L69.3 290.8L68.4 292.8z" fill="#efe0b0" stroke="#efe0b0" stroke-width=".5"/>
<path d="M64.3 290.6L65.1 289.0L70.1 289.2L69.3 290.8z" fill="#ddcc9d" stroke="#ddcc9d" stroke-width=".5"/>
<path d="M65.1 289.0L65.9 288.0L70.9 288.2L70.1 289.2z" fill="#c5b082" stroke="#c5b082" stroke-width=".5"/>
<path d="M65.9 288.0L66.7 287.6L71.7 287.9L70.9 288.2z" fill="#b49c6f" stroke="#b49c6f" stroke-width=".5"/>
<path d="M73.1 302.8L73.8 302.5L78.8 302.9L78.0 303.2z" fill="#b49c6f" stroke="#b49c6f" stroke-width=".5"/>
<path d="M73.8 302.5L74.6 301.5L79.6 302.0L78.8 302.9z" fill="#c5b082" stroke="#c5b082" stroke-width=".5"/>
<path d="M74.6 301.5L75.5 299.9L80.5 300.4L79.6 302.0z" fill="#ddcc9d" stroke="#ddcc9d" stroke-width=".5"/>
<path d="M75.5 299.9L76.4 298.0L81.4 298.4L80.5 300.4z" fill="#efe0b0" stroke="#efe0b0" stroke-width=".5"/>
<path d="M76.4 298.0L77.3 295.7L82.3 296.2L81.4 298.4z" fill="#f5e7b7" stroke="#f5e7b7" stroke-width=".5"/>
<path d="M77.3 295.7L78.3 293.5L83.3 294.0L82.3 296.2z" fill="#f5e7b7" stroke="#f5e7b7" stroke-width=".5"/>
<path d="M78.3 293.5L79.2 291.6L84.2 292.0L83.3 294.0z" fill="#efe0b0" stroke="#efe0b0" stroke-width=".5"/>
<path d="M79.2 291.6L80.1 290.0L85.1 290.5L84.2 292.0z" fill="#ddcc9d" stroke="#ddcc9d" stroke-width=".5"/>
<path d="M80.1 290.0L80.9 289.0L85.9 289.5L85.1 290.5z" fill="#c5b082" stroke="#c5b082" stroke-width=".5"/>
<path d="M80.9 289.0L81.7 288.7L86.7 289.2L85.9 289.5z" fill="#b49c6f" stroke="#b49c6f" stroke-width=".5"/>
<path d="M87.2 304.1L87.9 303.9L92.8 304.7L92.1 304.9z" fill="#b49c6f" stroke="#b49c6f" stroke-width=".5"/>
<path d="M87.9 303.9L88.8 302.9L93.7 303.8L92.8 304.7z" fill="#c5b082" stroke="#c5b082" stroke-width=".5"/>
<path d="M88.8 302.9L89.7 301.4L94.6 302.3L93.7 303.8z" fill="#ddcc9d" stroke="#ddcc9d" stroke-width=".5"/>
<path d="M89.7 301.4L90.8 299.5L95.7 300.5L94.6 302.3z" fill="#efe0b0" stroke="#efe0b0" stroke-width=".5"/>
<path d="M90.8 299.5L92.0 297.4L96.9 298.4L95.7 300.5z" fill="#f5e7b7" stroke="#f5e7b7" stroke-width=".5"/>
<path d="M92.0 297.4L93.2 295.3L98.1 296.3L96.9 298.4z" fill="#f5e7b7" stroke="#f5e7b7" stroke-width=".5"/>
<path d="M93.2 295.3L94.4 293.4L99.3 294.5L98.1 296.3z" fill="#efe0b0" stroke="#efe0b0" stroke-width=".5"/>
<path d="M94.4 293.4L95.5 292.0L100.4 293.1L99.3 294.5z" fill="#ddcc9d" stroke="#ddcc9d" stroke-width=".5"/>
<path d="M95.5 292.0L96.5 291.1L101.4 292.3L100.4 293.1z" fill="#c5b082" stroke="#c5b082" stroke-width=".5"/>
<path d="M96.5 291.1L97.4 290.9L102.2 292.1L101.4 292.3z" fill="#b49c6f" stroke="#b49c6f" stroke-width=".5"/>
<path d="M100.1 306.9L100.9 306.8L105.5 308.6L104.8 308.6z" fill="#b49c6f" stroke="#b49c6f" stroke-width=".5"/>
<path d="M100.9 306.8L101.9 306.0L106.5 307.8L105.5 308.6z" fill="#c5b082" stroke="#c5b082" stroke-width=".5"/>
<path d="M101.9 306.0L103.1 304.7L107.7 306.6L106.5 307.8z" fill="#ddcc9d" stroke="#ddcc9d" stroke-width=".5"/>
<path d="M103.1 304.7L104.6 303.0L109.1 305.0L107.7 306.6z" fill="#efe0b0" stroke="#efe0b0" stroke-width=".5"/>
<path d="M104.6 303.0L106.2 301.2L110.7 303.3L109.1 305.0z" fill="#f5e7b7" stroke="#f5e7b7" stroke-width=".5"/>
<path d="M106.2 301.2L107.9 299.4L112.4 301.6L110.7 303.3z" fill="#f5e7b7" stroke="#f5e7b7" stroke-width=".5"/>
<path d="M107.9 299.4L109.5 297.9L114.0 300.1L112.4 301.6z" fill="#efe0b0" stroke="#efe0b0" stroke-width=".5"/>
<path d="M109.5 297.9L111.0 296.7L115.4 299.1L114.0 300.1z" fill="#ddcc9d" stroke="#ddcc9d" stroke-width=".5"/>
<path d="M111.0 296.7L112.2 296.2L116.6 298.5L115.4 299.1z" fill="#c5b082" stroke="#c5b082" stroke-width=".5"/>
<path d="M112.2 296.2L113.1 296.2L117.5 298.6L116.6 298.5z" fill="#b49c6f" stroke="#b49c6f" stroke-width=".5"/>
<path d="M111.6 312.4L112.4 312.5L116.4 315.4L115.7 315.3z" fill="#b49c6f" stroke="#b49c6f" stroke-width=".5"/>
<path d="M112.4 312.5L113.5 312.0L117.5 315.0L116.4 315.4z" fill="#c5b082" stroke="#c5b082" stroke-width=".5"/>
<path d="M113.5 312.0L115.1 311.1L119.1 314.1L117.5 315.0z" fill="#ddcc9d" stroke="#ddcc9d" stroke-width=".5"/>
<path d="M115.1 311.1L116.9 309.9L120.8 313.0L119.1 314.1z" fill="#efe0b0" stroke="#efe0b0" stroke-width=".5"/>
<path d="M116.9 309.9L118.9 308.5L122.8 311.6L120.8 313.0z" fill="#f5e7b7" stroke="#f5e7b7" stroke-width=".5"/>
<path d="M118.9 308.5L121.0 307.2L124.8 310.4L122.8 311.6z" fill="#f5e7b7" stroke="#f5e7b7" stroke-width=".5"/>
<path d="M121.0 307.2L122.9 306.1L126.7 309.3L124.8 310.4z" fill="#efe0b0" stroke="#efe0b0" stroke-width=".5"/>
<path d="M122.9 306.1L124.6 305.3L128.4 308.6L126.7 309.3z" fill="#ddcc9d" stroke="#ddcc9d" stroke-width=".5"/>
<path d="M124.6 305.3L126.0 305.1L129.7 308.4L128.4 308.6z" fill="#c5b082" stroke="#c5b082" stroke-width=".5"/>
<path d="M126.0 305.1L126.8 305.3L130.5 308.7L129.7 308.4z" fill="#b49c6f" stroke="#b49c6f" stroke-width=".5"/>
<path d="M121.5 320.7L122.2 320.9L125.4 324.8L124.7 324.5z" fill="#b49c6f" stroke="#b49c6f" stroke-width=".5"/>
<path d="M122.2 320.9L123.5 320.7L126.6 324.6L125.4 324.8z" fill="#c5b082" stroke="#c5b082" stroke-width=".5"/>
<path d="M123.5 320.7L125.2 320.2L128.3 324.1L126.6 324.6z" fill="#ddcc9d" stroke="#ddcc9d" stroke-width=".5"/>
<path d="M125.2 320.2L127.3 319.5L130.3 323.4L128.3 324.1z" fill="#efe0b0" stroke="#efe0b0" stroke-width=".5"/>
<path d="M127.3 319.5L129.6 318.6L132.5 322.7L130.3 323.4z" fill="#f5e7b7" stroke="#f5e7b7" stroke-width=".5"/>
<path d="M129.6 318.6L131.9 317.9L134.8 322.0L132.5 322.7z" fill="#f5e7b7" stroke="#f5e7b7" stroke-width=".5"/>
<path d="M131.9 317.9L134.1 317.3L136.9 321.5L134.8 322.0z" fill="#efe0b0" stroke="#efe0b0" stroke-width=".5"/>
<path d="M134.1 317.3L136.0 317.1L138.7 321.3L136.9 321.5z" fill="#ddcc9d" stroke="#ddcc9d" stroke-width=".5"/>
<path d="M136.0 317.1L137.4 317.3L140.0 321.6L138.7 321.3z" fill="#c5b082" stroke="#c5b082" stroke-width=".5"/>
<path d="M137.4 317.3L138.3 317.9L140.7 322.2L140.0 321.6z" fill="#b49c6f" stroke="#b49c6f" stroke-width=".5"/>
<path d="M128.3 330.6L128.9 331.1L130.6 335.9L130.0 335.3z" fill="#b49c6f" stroke="#b49c6f" stroke-width=".5"/>
<path d="M128.9 331.1L130.1 331.5L131.8 336.2L130.6 335.9z" fill="#c5b082" stroke="#c5b082" stroke-width=".5"/>
<path d="M130.1 331.5L131.9 331.6L133.6 336.3L131.8 336.2z" fill="#ddcc9d" stroke="#ddcc9d" stroke-width=".5"/>
<path d="M131.9 331.6L134.1 331.5L135.7 336.3L133.6 336.3z" fill="#efe0b0" stroke="#efe0b0" stroke-width=".5"/>
<path d="M134.1 331.5L136.6 331.5L138.0 336.3L135.7 336.3z" fill="#f5e7b7" stroke="#f5e7b7" stroke-width=".5"/>
<path d="M136.6 331.5L139.1 331.7L140.3 336.5L138.0 336.3z" fill="#f5e7b7" stroke="#f5e7b7" stroke-width=".5"/>
<path d="M139.1 331.7L141.4 332.1L142.4 337.0L140.3 336.5z" fill="#efe0b0" stroke="#efe0b0" stroke-width=".5"/>
<path d="M141.4 332.1L143.3 332.8L144.0 337.7L142.4 337.0z" fill="#ddcc9d" stroke="#ddcc9d" stroke-width=".5"/>
<path d="M143.3 332.8L144.6 333.6L145.1 338.6L144.0 337.7z" fill="#c5b082" stroke="#c5b082" stroke-width=".5"/>
<path d="M144.6 333.6L145.1 334.5L145.4 339.5L145.1 338.6z" fill="#b49c6f" stroke="#b49c6f" stroke-width=".5"/>
<path d="M144.6 312.7L145.7 312.7L149.9 313.9L148.8 313.9z" fill="#b29669" stroke="#b29669" stroke-width=".5"/>
<path d="M145.7 312.7L146.9 312.1L151.2 313.3L149.9 313.9z" fill="#c6ab7d" stroke="#c6ab7d" stroke-width=".5"/>
<path d="M146.9 312.1L148.3 311.0L152.6 312.2L151.2 313.3z" fill="#dfc695" stroke="#dfc695" stroke-width=".5"/>
<path d="M148.3 311.0L149.8 309.6L154.0 310.7L152.6 312.2z" fill="#ebd3a1" stroke="#ebd3a1" stroke-width=".5"/>
<path d="M149.8 309.6L151.2 308.2L155.5 309.3L154.0 310.7z" fill="#ebd3a1" stroke="#ebd3a1" stroke-width=".5"/>
<path d="M151.2 308.2L152.6 306.9L156.9 308.0L155.5 309.3z" fill="#e3ca99" stroke="#e3ca99" stroke-width=".5"/>
<path d="M152.6 306.9L153.9 306.2L158.1 307.2L156.9 308.0z" fill="#cbb182" stroke="#cbb182" stroke-width=".5"/>
<path d="M153.9 306.2L154.9 306.0L159.2 307.1L158.1 307.2z" fill="#b4996c" stroke="#b4996c" stroke-width=".5"/>
<path d="M150.2 292.4L151.1 292.4L155.1 293.7L154.2 293.7z" fill="#b2976a" stroke="#b2976a" stroke-width=".5"/>
<path d="M151.1 292.4L152.3 291.8L156.3 293.1L155.1 293.7z" fill="#c8ad7e" stroke="#c8ad7e" stroke-width=".5"/>
<path d="M152.3 291.8L153.6 290.7L157.6 292.0L156.3 293.1z" fill="#e1c897" stroke="#e1c897" stroke-width=".5"/>
<path d="M153.6 290.7L155.0 289.3L159.0 290.7L157.6 292.0z" fill="#ebd3a1" stroke="#ebd3a1" stroke-width=".5"/>
<path d="M155.0 289.3L156.4 288.0L160.4 289.3L159.0 290.7z" fill="#ebd3a1" stroke="#ebd3a1" stroke-width=".5"/>
<path d="M156.4 288.0L157.7 286.9L161.7 288.2L160.4 289.3z" fill="#e1c897" stroke="#e1c897" stroke-width=".5"/>
<path d="M157.7 286.9L158.9 286.3L162.9 287.6L161.7 288.2z" fill="#c8ad7e" stroke="#c8ad7e" stroke-width=".5"/>
<path d="M158.9 286.3L159.8 286.3L163.8 287.6L162.9 287.6z" fill="#b2976a" stroke="#b2976a" stroke-width=".5"/>
<path d="M191.7 292.2L192.1 292.2L195.3 293.4L194.8 293.5z" fill="#b19669" stroke="#b19669" stroke-width=".5"/>
<path d="M192.3 299.9L192.9 299.6L196.0 300.8L195.5 301.2z" fill="#bca173" stroke="#bca173" stroke-width=".5"/>
<path d="M192.9 299.6L193.6 298.8L196.8 300.0L196.0 300.8z" fill="#d7bd8d" stroke="#d7bd8d" stroke-width=".5"/>
<path d="M193.6 298.8L194.5 297.7L197.6 298.9L196.8 300.0z" fill="#e8d09f" stroke="#e8d09f" stroke-width=".5"/>
<path d="M194.5 297.7L195.4 296.5L198.5 297.7L197.6 298.9z" fill="#ebd3a1" stroke="#ebd3a1" stroke-width=".5"/>
<path d="M195.4 296.5L196.2 295.4L199.4 296.7L198.5 297.7z" fill="#e7cf9d" stroke="#e7cf9d" stroke-width=".5"/></g></svg>
</div></body></html>
